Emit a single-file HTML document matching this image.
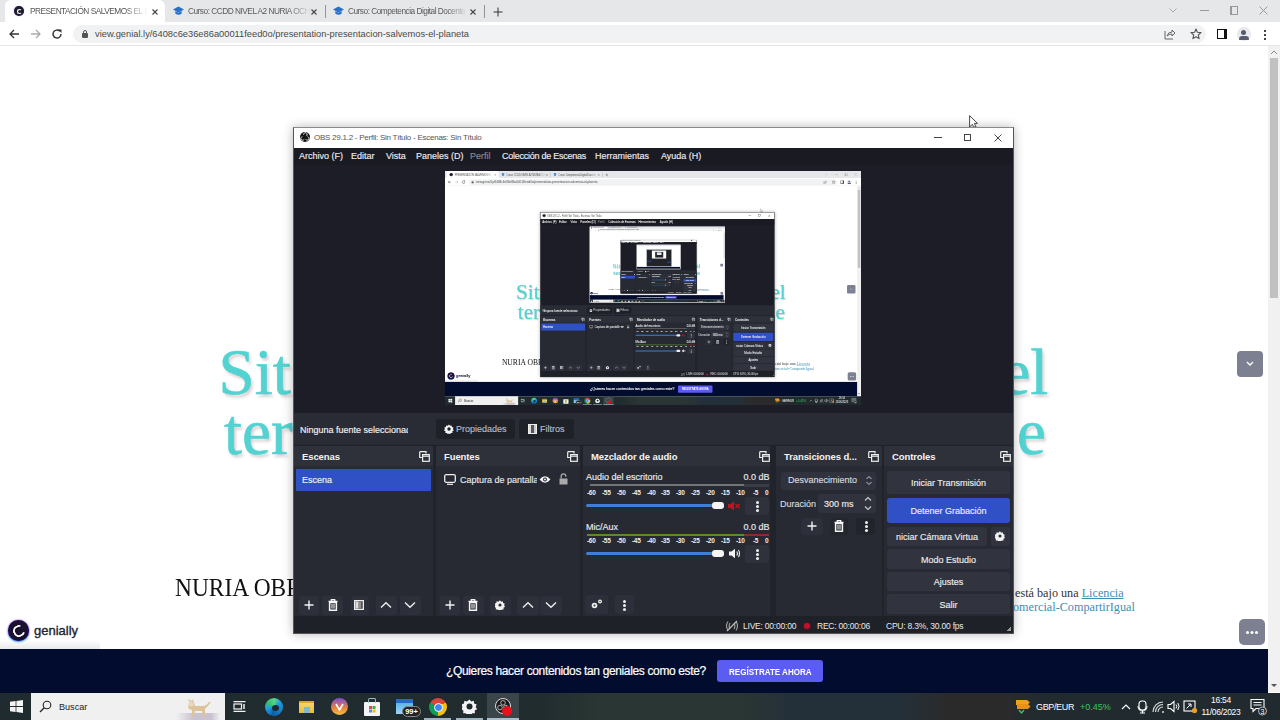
<!DOCTYPE html><html><head><meta charset="utf-8"><style>
*{margin:0;padding:0;box-sizing:border-box}
html,body{width:1280px;height:720px;overflow:hidden;background:#fff}
body{font-family:"Liberation Sans",sans-serif}
.d{position:absolute;left:0;top:0;width:1280px;height:720px;overflow:hidden;background:#fff}
.a{position:absolute;white-space:nowrap}
.tabs{position:absolute;left:0;top:0;width:1280px;height:22px;background:#e6e7e9}
.tab{position:absolute;top:1px;height:21px;font-size:8.3px;letter-spacing:-0.5px;color:#3c4043;line-height:21px;white-space:nowrap}
.tb{position:absolute;left:0;top:22px;width:1280px;height:24px;background:#fff;border-bottom:1px solid #e6e6e6}
.omni{position:absolute;left:73px;top:24.5px;width:1133px;height:18px;border-radius:9px;background:#f1f2f3}
.url{position:absolute;left:95px;top:29px;font-size:9.3px;color:#4a4a4a;line-height:10px}
.page{position:absolute;left:0;top:46px;width:1268px;height:603px;background:#fff;overflow:hidden}
.ttl{position:absolute;font-family:"Liberation Serif",serif;font-size:65px;color:#52d3d1;-webkit-text-stroke:0.6px #52d3d1;line-height:60px;text-shadow:2px 3px 3px rgba(150,120,130,.35)}
.band{position:absolute;left:0;top:649px;width:1268px;height:44px;background:#020c2e}
.task{position:absolute;left:0;top:693px;width:1280px;height:27px;background:linear-gradient(90deg,#202b2f 0,#212c2f 540px,#2a3633 600px,#2a3633 740px,#243039 790px,#243039 900px,#2b2a2a 950px,#2b2a2a 1000px,#212b2f 1040px,#212b2f 1280px)}
.obs{position:absolute;left:293px;top:127px;width:721px;height:507px;background:#1d1f27;border:1px solid #7a7a7a;border-top-color:#999;box-shadow:0 0 12px rgba(0,0,0,.25)}
.otitle{position:absolute;left:0;top:0;width:719px;height:21px;background:#fff}
.omenu{position:absolute;left:0;top:21px;width:719px;height:17px;background:#1a1a23;font-size:9px;color:#ececf0;line-height:17px;-webkit-text-stroke:0.15px currentColor}
.omenu span{position:absolute;top:0}
.dock{position:absolute;top:318px;height:171px;background:#272a33}
.dt{position:absolute;left:0;top:0;right:0;height:21px;background:#2e313b;font-size:10px;font-weight:bold;color:#f0f0f0;line-height:21px}
.btn{position:absolute;background:#2e313b;border-radius:2px}
.ct{position:absolute;left:3px;width:122px;background:#31343e;font-size:9px;color:#eee;text-align:center;border-radius:2px}
.ot{font-size:9px;color:#f2f2f2;line-height:12px;-webkit-text-stroke:0.15px currentColor}
.ost{top:620px;font-size:8.5px;letter-spacing:-0.22px;color:#e8e8e8;line-height:12px}
.dk{position:absolute;background:#272a33}
.dkt{position:absolute;height:20px;background:#2e313a;font-size:9.5px;letter-spacing:-0.1px;font-weight:bold;color:#f4f4f4;line-height:21px;padding-left:8px}
.fl{position:absolute;width:11px;height:11px}
.tbtn{position:absolute;background:#2d303a;border-radius:3px}
.cb{position:absolute;background:#31343e;border-radius:3px;padding-top:1px;font-size:9px;-webkit-text-stroke:0.15px currentColor;color:#ececec;text-align:center;line-height:20px}
.sc{position:absolute;font-size:6.5px;font-weight:bold;color:#eee;letter-spacing:-0.3px;line-height:7px}
</style></head><body><div class="d">
<!-- chrome tab strip -->
<div class="tabs">
 <div class="a" style="left:5px;top:0px;width:160px;height:22px;background:#fff;border-radius:6px 6px 0 0"></div>
 <div class="a" style="left:14px;top:6px;width:10px;height:10px;border-radius:50%;background:#1d1d2b;box-shadow:0 0 1px #a4f"></div>
 <div class="a" style="left:16.5px;top:8.5px;width:5px;height:5px;border-radius:50%;border:1.3px solid #fff;border-right-color:transparent"></div>
 <div class="tab" style="left:30px;width:118px;overflow:hidden;color:#555;-webkit-mask-image:linear-gradient(90deg,#000 80%,transparent)">PRESENTACIÓN SALVEMOS EL PLANETA</div>
 <svg class="a" style="left:152px;top:8.5px" width="6" height="6" viewBox="0 0 6 6"><path d="M0.5 0.5L5.5 5.5M5.5 0.5L0.5 5.5" stroke="#444" stroke-width="1.1"/></svg>
 <svg class="a" style="left:173px;top:6px" width="11" height="10" viewBox="0 0 11 10"><path d="M5.5 0.5L11 3.5L5.5 6.5L0 3.5Z" fill="#2a6fc9"/><path d="M2.3 5V7.6Q5.5 10 8.7 7.6V5L5.5 6.8Z" fill="#2a6fc9"/></svg>
 <div class="tab" style="left:188px;width:123px;overflow:hidden;color:#5a5a5a;-webkit-mask-image:linear-gradient(90deg,#000 82%,transparent)">Curso: CCDD NIVEL A2 NURIA OCHOA</div>
 <svg class="a" style="left:311px;top:8.5px" width="6" height="6" viewBox="0 0 6 6"><path d="M0.5 0.5L5.5 5.5M5.5 0.5L0.5 5.5" stroke="#444" stroke-width="1.1"/></svg>
 <div class="a" style="left:325px;top:5px;width:1px;height:13px;background:#8f959b"></div>
 <svg class="a" style="left:333px;top:6px" width="11" height="10" viewBox="0 0 11 10"><path d="M5.5 0.5L11 3.5L5.5 6.5L0 3.5Z" fill="#2a6fc9"/><path d="M2.3 5V7.6Q5.5 10 8.7 7.6V5L5.5 6.8Z" fill="#2a6fc9"/></svg>
 <div class="tab" style="left:348px;width:120px;overflow:hidden;color:#5a5a5a;-webkit-mask-image:linear-gradient(90deg,#000 82%,transparent)">Curso: Competencia Digital Docente</div>
 <svg class="a" style="left:470px;top:8.5px" width="6" height="6" viewBox="0 0 6 6"><path d="M0.5 0.5L5.5 5.5M5.5 0.5L0.5 5.5" stroke="#444" stroke-width="1.1"/></svg>
 <div class="a" style="left:484px;top:5px;width:1px;height:13px;background:#8f959b"></div>
 <svg class="a" style="left:493px;top:6.5px" width="10" height="10" viewBox="0 0 10 10"><path d="M5 0.5V9.5M0.5 5H9.5" stroke="#333" stroke-width="1"/></svg>
 <svg class="a" style="left:1169px;top:8px" width="8" height="5" viewBox="0 0 8 5"><path d="M0.5 0.5L4 4L7.5 0.5" stroke="#aaa" stroke-width="1" fill="none"/></svg>
 <div class="a" style="left:1200px;top:10px;width:9px;height:1px;background:#999"></div>
 <div class="a" style="left:1230px;top:6px;width:8px;height:9px;border:1px solid #999;border-left-width:2px"></div>
 <svg class="a" style="left:1259px;top:6px" width="9" height="9" viewBox="0 0 9 9"><path d="M0.5 0.5L8.5 8.5M8.5 0.5L0.5 8.5" stroke="#999" stroke-width="1"/></svg>
</div>
<div class="tb">
 <svg class="a" style="left:8px;top:6px" width="12" height="12" viewBox="0 0 12 12"><path d="M11 6H2M6 2L2 6L6 10" stroke="#333" stroke-width="1.3" fill="none"/></svg>
 <svg class="a" style="left:30px;top:6px" width="12" height="12" viewBox="0 0 12 12"><path d="M1 6H10M6 2L10 6L6 10" stroke="#aaa" stroke-width="1.3" fill="none"/></svg>
 <svg class="a" style="left:51px;top:6px" width="12" height="12" viewBox="0 0 12 12"><path d="M10 6A4 4 0 1 1 8.8 3.2" stroke="#333" stroke-width="1.4" fill="none"/><path d="M7 1.5H10.5V5Z" fill="#333"/></svg>
</div>
<div class="omni"></div>
<div class="a" style="left:82px;top:33px;width:6px;height:5px;background:#555;border-radius:1px"></div>
<div class="a" style="left:83px;top:30px;width:4px;height:5px;border:1.2px solid #555;border-radius:2px 2px 0 0"></div>
<div class="url a">view.genial.ly/6408c6e36e86a00011feed0o/presentation-presentacion-salvemos-el-planeta</div>
<svg class="a" style="left:1164px;top:28px" width="12" height="12" viewBox="0 0 12 12"><path d="M1 3V11H9" stroke="#666" stroke-width="1" fill="none"/><path d="M3 8Q4 4 8 4V2L11 5L8 8V6Q5 6 3 8Z" stroke="#666" stroke-width="1" fill="none"/></svg>
<svg class="a" style="left:1190px;top:28px" width="12" height="12" viewBox="0 0 12 12"><path d="M6 1L7.4 4.3L11 4.6L8.3 7L9.1 10.6L6 8.7L2.9 10.6L3.7 7L1 4.6L4.6 4.3Z" stroke="#555" stroke-width="1.1" fill="none" stroke-linejoin="round"/></svg>
<div class="a" style="left:1217px;top:29px;width:10px;height:10px;border:1.5px solid #111;border-right-width:3px"></div>
<div class="a" style="left:1237px;top:27px;width:14px;height:14px;border-radius:50%;background:#e8e8ef"></div>
<div class="a" style="left:1241px;top:30px;width:5px;height:5px;border-radius:50%;background:#555a6e"></div>
<div class="a" style="left:1239px;top:36px;width:10px;height:4px;border-radius:5px 5px 1px 1px;background:#555a6e"></div>
<div class="a" style="left:1264px;top:30px;width:2px;height:2px;background:#444;box-shadow:0 4px 0 #444,0 8px 0 #444"></div>

<!-- page -->
<div class="page">
 <div class="ttl a" style="left:218.5px;top:295.5px">Sit</div>
 <div class="ttl a" style="left:969px;top:295.5px">del</div>
 <div class="ttl a" style="left:224px;top:356px">ter</div>
 <div class="ttl a" style="left:1017px;top:356px">e</div>
 <div class="a" style="left:175px;top:527px;font-family:'Liberation Serif',serif;font-size:26px;line-height:30px;color:#111;transform:scaleX(0.9);transform-origin:0 0">NURIA OBRERO</div>
 <div class="a" style="left:1015px;top:540px;font-family:'Liberation Serif',serif;font-size:12.2px;line-height:14px;color:#333">está bajo una <span style="color:#3d8fb2;text-decoration:underline">Licencia</span></div>
 <div class="a" style="left:1013px;top:554px;font-family:'Liberation Serif',serif;font-size:12.2px;line-height:14px;color:#3d8fb2">omercial-CompartirIgual</div>
 <div class="a" style="left:1237px;top:305px;width:26px;height:26px;border-radius:4px;background:#7c8091"></div>
 <svg class="a" style="left:1245px;top:315px" width="10" height="6" viewBox="0 0 10 6"><path d="M2 1L5 4L8 1" stroke="#fff" stroke-width="1.4" fill="none"/></svg>
 <div class="a" style="left:1239px;top:573px;width:26px;height:26px;border-radius:5px;background:#7c8091"></div>
 <div class="a" style="left:1246px;top:585px;width:3px;height:3px;border-radius:50%;background:#fff;box-shadow:4.5px 0 0 #fff,9px 0 0 #fff"></div>
 <div class="a" style="left:0;top:594px;width:100px;height:9px;background:linear-gradient(#fff,#e9e9ea)"></div>
 <div class="a" style="left:8px;top:574px;width:21px;height:21px;border-radius:50%;background:#1a1030;box-shadow:0 0 2px #a0f,0 1px 2px #0cf"></div>
 <div class="a" style="left:12.5px;top:578.5px;width:12px;height:12px;border-radius:50%;border:2.5px solid #fff;border-right-color:transparent;transform:rotate(-30deg)"></div>
 <div class="a" style="left:34px;top:577.5px;font-size:13px;color:#22232f;line-height:14px;-webkit-text-stroke:0.35px #22232f">genially</div>
 <!-- scrollbar -->
</div>
<div class="a" style="left:1268px;top:46px;width:12px;height:646px;background:#f1f1f1"></div>
<div class="a" style="left:1270px;top:58px;width:8px;height:240px;background:#c1c1c1"></div>
<svg class="a" style="left:1270px;top:49px" width="8" height="6" viewBox="0 0 8 6"><path d="M1 5L4 2L7 5" stroke="#888" stroke-width="1" fill="none"/></svg>
<svg class="a" style="left:1270px;top:683px" width="8" height="6" viewBox="0 0 8 6"><path d="M1 1L4 4L7 1Z" fill="#555"/></svg>
<!-- band -->
<div class="band">
 <div class="a" style="left:446px;top:14px;font-size:12px;letter-spacing:-0.36px;-webkit-text-stroke:0.2px #fff;color:#fff;line-height:16px">¿Quieres hacer contenidos tan geniales como este?</div>
 <div class="a" style="left:717px;top:11px;width:106px;height:22px;border-radius:3px;background:#5b5cf2"></div>
 <div class="a" style="left:729px;top:17px;font-size:9.8px;font-weight:bold;color:#fff;line-height:12px;transform:scaleX(0.82);transform-origin:0 0">REGÍSTRATE AHORA</div>
</div>
<!-- taskbar -->
<div class="task">
 <svg class="a" style="left:10px;top:7px" width="13" height="13" viewBox="0 0 13 13"><path d="M0 1.8L5.6 1V6.1H0ZM6.4 0.9L13 0V6.1H6.4ZM0 6.9H5.6V12L0 11.2ZM6.4 6.9H13V13L6.4 12.1Z" fill="#f4f4f4"/></svg>
 <div class="a" style="left:31px;top:0;width:194px;height:27px;background:#f0f0f0"></div>
 <svg class="a" style="left:39px;top:7px" width="13" height="13" viewBox="0 0 13 13"><circle cx="8" cy="5" r="3.8" stroke="#222" stroke-width="1.1" fill="none"/><path d="M5.3 7.7L1 12" stroke="#222" stroke-width="1.3"/></svg>
 <div class="a" style="left:59px;top:8px;font-size:9.1px;color:#222;line-height:12px">Buscar</div>
 <div class="a" style="left:176px;top:20px;width:44px;height:7px;background:linear-gradient(90deg,#f0f0f0,#c9c2d0 40%,#c9c2d0 80%,#f0f0f0)"></div>
 <svg class="a" style="left:183px;top:3px" width="30" height="22" viewBox="0 0 30 22"><path d="M5 3L7 7Q4 10 6 13L9 14L9 21H11L12 15L19 15L20 21H22L22 13Q25 10 28 6L26 6Q23 10 20 10L12 10Q11 7 10 3L9 5Z" fill="#dcc39a"/><circle cx="8" cy="8" r="2.5" fill="#e9d8bb"/></svg>
 <svg class="a" style="left:233px;top:8px" width="13" height="11" viewBox="0 0 13 11"><path d="M0.5 0.7H12.5M0.5 10.3H12.5" stroke="#f2f2f2" stroke-width="1.2"/><rect x="1" y="3" width="7.5" height="5" stroke="#f2f2f2" stroke-width="1.2" fill="none"/><path d="M11 3V8" stroke="#f2f2f2" stroke-width="1.5"/></svg>
 <div class="a" style="left:265px;top:5px;width:18px;height:18px;border-radius:50%;background:conic-gradient(from 200deg,#0f6cbd,#1b9de2,#37c36b,#5fd38a,#1b9de2 60%,#0c5aa6)"></div>
 <div class="a" style="left:272px;top:12px;width:7px;height:6px;border-radius:50%;background:#1f292e"></div>
 <div class="a" style="left:299px;top:8px;width:15px;height:12px;background:linear-gradient(#f6d469,#e8bd3a);border-top:2px solid #d9a82a"></div>
 <div class="a" style="left:304px;top:14px;width:6px;height:6px;background:#7fb8d8"></div>
 <div class="a" style="left:331px;top:5px;width:17px;height:17px;border-radius:50%;background:linear-gradient(#7b4ad8,#e9863a 60%,#f0c24a)"></div>
 <svg class="a" style="left:335px;top:10px" width="9" height="8" viewBox="0 0 9 8"><path d="M1 1L4.5 7L8 1" stroke="#fff" stroke-width="1.6" fill="none"/></svg>
 <div class="a" style="left:364px;top:9px;width:16px;height:14px;background:#f4f4f4;border-radius:1px"></div>
 <div class="a" style="left:368px;top:5px;width:8px;height:5px;border:1.3px solid #9bbcc0;border-bottom:none;border-radius:2px 2px 0 0"></div>
 <div class="a" style="left:369px;top:13px;width:2.5px;height:2.5px;background:#e44;box-shadow:3.5px 0 0 #4a4,0 3.5px 0 #39f,3.5px 3.5px 0 #fb0"></div>
 <div class="a" style="left:396px;top:6px;width:17px;height:15px;background:linear-gradient(#1e6fc4 30%,#5fb6ea 30%,#9fd6f5)"></div>
 <div class="a" style="left:402px;top:13px;width:19px;height:11px;border-radius:6px;background:#222;border:1px solid #888;font-size:7.5px;color:#fff;line-height:9px;text-align:center;font-weight:bold">99+</div>
 <div class="a" style="left:429px;top:5px;width:18px;height:18px;border-radius:50%;background:conic-gradient(from -60deg,#db4437 0 120deg,#f4c20d 120deg 240deg,#0f9d58 240deg 360deg)"></div>
 <div class="a" style="left:433.5px;top:9.5px;width:9px;height:9px;border-radius:50%;background:#4285f4;border:1.6px solid #fff"></div>
 <svg class="a" style="left:462px;top:6px" width="15" height="15" viewBox="0 0 10 10"><path d="M5 0.3l1.1 1.4 1.7-.5.3 1.8 1.7.7-.7 1.6 1 1.5-1.6.9.1 1.8-1.8 0-.8 1.6-1.3-1.1-1.3 1.1-.8-1.6-1.8 0 .1-1.8-1.6-.9 1-1.5-.7-1.6 1.7-.7.3-1.8 1.7.5z" fill="#f4f4f4"/><circle cx="5" cy="5" r="2" fill="#1f292e"/></svg>
 <div class="a" style="left:487px;top:0;width:32px;height:27px;background:#3b4449"></div>
 <div class="a" style="left:495px;top:5px;width:16px;height:16px;border-radius:50%;background:#1a1a1a;border:1.2px solid #ddd"></div>
 <svg class="a" style="left:495px;top:5px" width="16" height="16" viewBox="0 0 16 16"><circle cx="8" cy="4.8" r="2.3" stroke="#bbb" stroke-width="0.9" fill="none"/><circle cx="5" cy="9.6" r="2.3" stroke="#bbb" stroke-width="0.9" fill="none"/><circle cx="10.8" cy="9.6" r="2.3" stroke="#bbb" stroke-width="0.9" fill="none"/></svg>
 <div class="a" style="left:502px;top:13px;width:10px;height:10px;border-radius:50%;background:#e8101c"></div>
 <div class="a" style="left:424px;top:25px;width:27px;height:2px;background:#9fb3c2"></div>
 <div class="a" style="left:456px;top:25px;width:27px;height:2px;background:#9fb3c2"></div>
 <div class="a" style="left:487px;top:25px;width:32px;height:2px;background:#a9bccb"></div>
 <svg class="a" style="left:1014px;top:5px" width="18" height="18" viewBox="0 0 18 18"><path d="M2 2H13L16 4.5L13 7H2Z" fill="#f0a020"/><path d="M3 6H14L16.5 8.5L14 11H3Z" fill="#e8901a"/><path d="M5 12L7.5 15L10 12" stroke="#3dc35a" stroke-width="1.4" fill="none"/></svg>
 <div class="a" style="left:1036px;top:8px;font-size:9px;letter-spacing:-0.35px;color:#fff;line-height:12px">GBP/EUR</div>
 <div class="a" style="left:1080px;top:8px;font-size:9px;color:#3dc35a;line-height:12px">+0.45%</div>
 <svg class="a" style="left:1121px;top:10px" width="10" height="7" viewBox="0 0 10 7"><path d="M1 6L5 2L9 6" stroke="#fff" stroke-width="1.1" fill="none"/></svg>
 <svg class="a" style="left:1137px;top:7px" width="11" height="14" viewBox="0 0 11 14"><rect x="2" y="1" width="7" height="9" rx="3" stroke="#fff" stroke-width="1.1" fill="none"/><path d="M5.5 10V13M3 13H8M1 6Q1 11 5.5 11Q10 11 10 6" stroke="#fff" stroke-width="1" fill="none"/></svg>
 <svg class="a" style="left:1152px;top:8px" width="14" height="12" viewBox="0 0 14 12"><path d="M1 11A10 10 0 0 1 11 1M3.5 11A7.5 7.5 0 0 1 11 3.5M6 11A5 5 0 0 1 11 6" stroke="#ddd" stroke-width="1.1" fill="none"/><circle cx="11" cy="11" r="1" fill="#ddd"/></svg>
 <svg class="a" style="left:1167px;top:7px" width="14" height="13" viewBox="0 0 14 13"><path d="M1 4.5H3.5L7 1.5V11.5L3.5 8.5H1Z" stroke="#fff" stroke-width="1.1" fill="none"/><path d="M9 4.5Q10.5 6.5 9 8.5M10.8 3Q13.3 6.5 10.8 10" stroke="#fff" stroke-width="1" fill="none"/></svg>
 <svg class="a" style="left:1183px;top:7px" width="15" height="14" viewBox="0 0 15 14"><rect x="1" y="1" width="11" height="10" stroke="#fff" stroke-width="1.1" fill="none"/><path d="M3.5 8.5L8 4M5 4H8V7" stroke="#fff" stroke-width="1" fill="none"/><circle cx="11.5" cy="10.5" r="2.6" fill="#f0a020"/></svg>
 <div class="a" style="left:1201px;top:1px;width:40px;font-size:8.5px;letter-spacing:-0.3px;color:#fff;text-align:center;line-height:12px">16:54<br>11/06/2023</div>
 <svg class="a" style="left:1250px;top:5px" width="18" height="18" viewBox="0 0 18 18"><path d="M1 1.5H14V10.5H6L3 13.5V10.5H1Z" stroke="#fff" stroke-width="1.1" fill="none"/><path d="M3.5 4.5H11.5M3.5 7H11.5" stroke="#fff" stroke-width="1"/><circle cx="12.5" cy="13" r="4" fill="#1f292e" stroke="#ccc" stroke-width="0.9"/><text x="12.5" y="15.8" font-size="7" fill="#fff" text-anchor="middle" font-family="Liberation Sans">3</text></svg>
</div>
<!-- OBS -->
<div class="a" style="left:293px;top:127px;width:721px;height:507px;background:#1c1d26;box-shadow:0 0 10px rgba(0,0,0,.28);border:1px solid #555;border-top-color:#8a8a8a"></div>
<div class="a otb" style="left:294px;top:128px;width:719px;height:20px;background:#fff"></div>
<div class="a" style="left:300px;top:132px;width:10px;height:10px;border-radius:50%;background:#121212"></div>
<svg class="a" style="left:300px;top:132px" width="10" height="10" viewBox="0 0 10 10"><path d="M3.6 2.8A1.8 1.8 0 1 1 6.2 4.1M4.2 7.4A1.8 1.8 0 1 1 2.4 4.6M7.6 4.6A1.8 1.8 0 1 1 5.6 7.3" stroke="#eee" stroke-width="0.9" fill="none"/></svg>
<div class="a" style="left:314px;top:132px;font-size:8px;letter-spacing:-0.25px;color:#555;line-height:11px">OBS 29.1.2 - Perfil: Sin Título - Escenas: Sin Título</div>
<div class="a" style="left:934px;top:137px;width:8px;height:1px;background:#444"></div>
<div class="a" style="left:964px;top:134px;width:7px;height:7px;border:1px solid #444"></div>
<svg class="a" style="left:994px;top:134px" width="8" height="8" viewBox="0 0 8 8"><path d="M0.5 0.5L7.5 7.5M7.5 0.5L0.5 7.5" stroke="#444" stroke-width="1"/></svg>
<div class="a omenu" style="left:294px;top:148px;width:719px;height:17px">
 <span style="left:5px">Archivo (F)</span><span style="left:57px">Editar</span><span style="left:92px">Vista</span><span style="left:122px">Paneles (D)</span><span style="left:176px;color:#8a8a93">Perfil</span><span style="left:208px;letter-spacing:-0.25px">Colección de Escenas</span><span style="left:301px">Herramientas</span><span style="left:367px">Ayuda (H)</span>
</div>
<div class="a" style="left:445px;top:171px;width:416px;height:234px;overflow:hidden;background:#fff"><div class="a lv" style="left:0;top:0;width:1280px;height:720px;transform:scale(0.325);transform-origin:0 0"><div class="d">
<!-- chrome tab strip -->
<div class="tabs">
 <div class="a" style="left:5px;top:0px;width:160px;height:22px;background:#fff;border-radius:6px 6px 0 0"></div>
 <div class="a" style="left:14px;top:6px;width:10px;height:10px;border-radius:50%;background:#1d1d2b;box-shadow:0 0 1px #a4f"></div>
 <div class="a" style="left:16.5px;top:8.5px;width:5px;height:5px;border-radius:50%;border:1.3px solid #fff;border-right-color:transparent"></div>
 <div class="tab" style="left:30px;width:118px;overflow:hidden;color:#555;-webkit-mask-image:linear-gradient(90deg,#000 80%,transparent)">PRESENTACIÓN SALVEMOS EL PLANETA</div>
 <svg class="a" style="left:152px;top:8.5px" width="6" height="6" viewBox="0 0 6 6"><path d="M0.5 0.5L5.5 5.5M5.5 0.5L0.5 5.5" stroke="#444" stroke-width="1.1"/></svg>
 <svg class="a" style="left:173px;top:6px" width="11" height="10" viewBox="0 0 11 10"><path d="M5.5 0.5L11 3.5L5.5 6.5L0 3.5Z" fill="#2a6fc9"/><path d="M2.3 5V7.6Q5.5 10 8.7 7.6V5L5.5 6.8Z" fill="#2a6fc9"/></svg>
 <div class="tab" style="left:188px;width:123px;overflow:hidden;color:#5a5a5a;-webkit-mask-image:linear-gradient(90deg,#000 82%,transparent)">Curso: CCDD NIVEL A2 NURIA OCHOA</div>
 <svg class="a" style="left:311px;top:8.5px" width="6" height="6" viewBox="0 0 6 6"><path d="M0.5 0.5L5.5 5.5M5.5 0.5L0.5 5.5" stroke="#444" stroke-width="1.1"/></svg>
 <div class="a" style="left:325px;top:5px;width:1px;height:13px;background:#8f959b"></div>
 <svg class="a" style="left:333px;top:6px" width="11" height="10" viewBox="0 0 11 10"><path d="M5.5 0.5L11 3.5L5.5 6.5L0 3.5Z" fill="#2a6fc9"/><path d="M2.3 5V7.6Q5.5 10 8.7 7.6V5L5.5 6.8Z" fill="#2a6fc9"/></svg>
 <div class="tab" style="left:348px;width:120px;overflow:hidden;color:#5a5a5a;-webkit-mask-image:linear-gradient(90deg,#000 82%,transparent)">Curso: Competencia Digital Docente</div>
 <svg class="a" style="left:470px;top:8.5px" width="6" height="6" viewBox="0 0 6 6"><path d="M0.5 0.5L5.5 5.5M5.5 0.5L0.5 5.5" stroke="#444" stroke-width="1.1"/></svg>
 <div class="a" style="left:484px;top:5px;width:1px;height:13px;background:#8f959b"></div>
 <svg class="a" style="left:493px;top:6.5px" width="10" height="10" viewBox="0 0 10 10"><path d="M5 0.5V9.5M0.5 5H9.5" stroke="#333" stroke-width="1"/></svg>
 <svg class="a" style="left:1169px;top:8px" width="8" height="5" viewBox="0 0 8 5"><path d="M0.5 0.5L4 4L7.5 0.5" stroke="#aaa" stroke-width="1" fill="none"/></svg>
 <div class="a" style="left:1200px;top:10px;width:9px;height:1px;background:#999"></div>
 <div class="a" style="left:1230px;top:6px;width:8px;height:9px;border:1px solid #999;border-left-width:2px"></div>
 <svg class="a" style="left:1259px;top:6px" width="9" height="9" viewBox="0 0 9 9"><path d="M0.5 0.5L8.5 8.5M8.5 0.5L0.5 8.5" stroke="#999" stroke-width="1"/></svg>
</div>
<div class="tb">
 <svg class="a" style="left:8px;top:6px" width="12" height="12" viewBox="0 0 12 12"><path d="M11 6H2M6 2L2 6L6 10" stroke="#333" stroke-width="1.3" fill="none"/></svg>
 <svg class="a" style="left:30px;top:6px" width="12" height="12" viewBox="0 0 12 12"><path d="M1 6H10M6 2L10 6L6 10" stroke="#aaa" stroke-width="1.3" fill="none"/></svg>
 <svg class="a" style="left:51px;top:6px" width="12" height="12" viewBox="0 0 12 12"><path d="M10 6A4 4 0 1 1 8.8 3.2" stroke="#333" stroke-width="1.4" fill="none"/><path d="M7 1.5H10.5V5Z" fill="#333"/></svg>
</div>
<div class="omni"></div>
<div class="a" style="left:82px;top:33px;width:6px;height:5px;background:#555;border-radius:1px"></div>
<div class="a" style="left:83px;top:30px;width:4px;height:5px;border:1.2px solid #555;border-radius:2px 2px 0 0"></div>
<div class="url a">view.genial.ly/6408c6e36e86a00011feed0o/presentation-presentacion-salvemos-el-planeta</div>
<svg class="a" style="left:1164px;top:28px" width="12" height="12" viewBox="0 0 12 12"><path d="M1 3V11H9" stroke="#666" stroke-width="1" fill="none"/><path d="M3 8Q4 4 8 4V2L11 5L8 8V6Q5 6 3 8Z" stroke="#666" stroke-width="1" fill="none"/></svg>
<svg class="a" style="left:1190px;top:28px" width="12" height="12" viewBox="0 0 12 12"><path d="M6 1L7.4 4.3L11 4.6L8.3 7L9.1 10.6L6 8.7L2.9 10.6L3.7 7L1 4.6L4.6 4.3Z" stroke="#555" stroke-width="1.1" fill="none" stroke-linejoin="round"/></svg>
<div class="a" style="left:1217px;top:29px;width:10px;height:10px;border:1.5px solid #111;border-right-width:3px"></div>
<div class="a" style="left:1237px;top:27px;width:14px;height:14px;border-radius:50%;background:#e8e8ef"></div>
<div class="a" style="left:1241px;top:30px;width:5px;height:5px;border-radius:50%;background:#555a6e"></div>
<div class="a" style="left:1239px;top:36px;width:10px;height:4px;border-radius:5px 5px 1px 1px;background:#555a6e"></div>
<div class="a" style="left:1264px;top:30px;width:2px;height:2px;background:#444;box-shadow:0 4px 0 #444,0 8px 0 #444"></div>

<!-- page -->
<div class="page">
 <div class="ttl a" style="left:218.5px;top:295.5px">Sit</div>
 <div class="ttl a" style="left:969px;top:295.5px">del</div>
 <div class="ttl a" style="left:224px;top:356px">ter</div>
 <div class="ttl a" style="left:1017px;top:356px">e</div>
 <div class="a" style="left:175px;top:527px;font-family:'Liberation Serif',serif;font-size:26px;line-height:30px;color:#111;transform:scaleX(0.9);transform-origin:0 0">NURIA OBRERO</div>
 <div class="a" style="left:1015px;top:540px;font-family:'Liberation Serif',serif;font-size:12.2px;line-height:14px;color:#333">está bajo una <span style="color:#3d8fb2;text-decoration:underline">Licencia</span></div>
 <div class="a" style="left:1013px;top:554px;font-family:'Liberation Serif',serif;font-size:12.2px;line-height:14px;color:#3d8fb2">omercial-CompartirIgual</div>
 <div class="a" style="left:1237px;top:305px;width:26px;height:26px;border-radius:4px;background:#7c8091"></div>
 <svg class="a" style="left:1245px;top:315px" width="10" height="6" viewBox="0 0 10 6"><path d="M2 1L5 4L8 1" stroke="#fff" stroke-width="1.4" fill="none"/></svg>
 <div class="a" style="left:1239px;top:573px;width:26px;height:26px;border-radius:5px;background:#7c8091"></div>
 <div class="a" style="left:1246px;top:585px;width:3px;height:3px;border-radius:50%;background:#fff;box-shadow:4.5px 0 0 #fff,9px 0 0 #fff"></div>
 <div class="a" style="left:0;top:594px;width:100px;height:9px;background:linear-gradient(#fff,#e9e9ea)"></div>
 <div class="a" style="left:8px;top:574px;width:21px;height:21px;border-radius:50%;background:#1a1030;box-shadow:0 0 2px #a0f,0 1px 2px #0cf"></div>
 <div class="a" style="left:12.5px;top:578.5px;width:12px;height:12px;border-radius:50%;border:2.5px solid #fff;border-right-color:transparent;transform:rotate(-30deg)"></div>
 <div class="a" style="left:34px;top:577.5px;font-size:13px;color:#22232f;line-height:14px;-webkit-text-stroke:0.35px #22232f">genially</div>
 <!-- scrollbar -->
</div>
<div class="a" style="left:1268px;top:46px;width:12px;height:646px;background:#f1f1f1"></div>
<div class="a" style="left:1270px;top:58px;width:8px;height:240px;background:#c1c1c1"></div>
<svg class="a" style="left:1270px;top:49px" width="8" height="6" viewBox="0 0 8 6"><path d="M1 5L4 2L7 5" stroke="#888" stroke-width="1" fill="none"/></svg>
<svg class="a" style="left:1270px;top:683px" width="8" height="6" viewBox="0 0 8 6"><path d="M1 1L4 4L7 1Z" fill="#555"/></svg>
<!-- band -->
<div class="band">
 <div class="a" style="left:446px;top:14px;font-size:12px;letter-spacing:-0.36px;-webkit-text-stroke:0.2px #fff;color:#fff;line-height:16px">¿Quieres hacer contenidos tan geniales como este?</div>
 <div class="a" style="left:717px;top:11px;width:106px;height:22px;border-radius:3px;background:#5b5cf2"></div>
 <div class="a" style="left:729px;top:17px;font-size:9.8px;font-weight:bold;color:#fff;line-height:12px;transform:scaleX(0.82);transform-origin:0 0">REGÍSTRATE AHORA</div>
</div>
<!-- taskbar -->
<div class="task">
 <svg class="a" style="left:10px;top:7px" width="13" height="13" viewBox="0 0 13 13"><path d="M0 1.8L5.6 1V6.1H0ZM6.4 0.9L13 0V6.1H6.4ZM0 6.9H5.6V12L0 11.2ZM6.4 6.9H13V13L6.4 12.1Z" fill="#f4f4f4"/></svg>
 <div class="a" style="left:31px;top:0;width:194px;height:27px;background:#f0f0f0"></div>
 <svg class="a" style="left:39px;top:7px" width="13" height="13" viewBox="0 0 13 13"><circle cx="8" cy="5" r="3.8" stroke="#222" stroke-width="1.1" fill="none"/><path d="M5.3 7.7L1 12" stroke="#222" stroke-width="1.3"/></svg>
 <div class="a" style="left:59px;top:8px;font-size:9.1px;color:#222;line-height:12px">Buscar</div>
 <div class="a" style="left:176px;top:20px;width:44px;height:7px;background:linear-gradient(90deg,#f0f0f0,#c9c2d0 40%,#c9c2d0 80%,#f0f0f0)"></div>
 <svg class="a" style="left:183px;top:3px" width="30" height="22" viewBox="0 0 30 22"><path d="M5 3L7 7Q4 10 6 13L9 14L9 21H11L12 15L19 15L20 21H22L22 13Q25 10 28 6L26 6Q23 10 20 10L12 10Q11 7 10 3L9 5Z" fill="#dcc39a"/><circle cx="8" cy="8" r="2.5" fill="#e9d8bb"/></svg>
 <svg class="a" style="left:233px;top:8px" width="13" height="11" viewBox="0 0 13 11"><path d="M0.5 0.7H12.5M0.5 10.3H12.5" stroke="#f2f2f2" stroke-width="1.2"/><rect x="1" y="3" width="7.5" height="5" stroke="#f2f2f2" stroke-width="1.2" fill="none"/><path d="M11 3V8" stroke="#f2f2f2" stroke-width="1.5"/></svg>
 <div class="a" style="left:265px;top:5px;width:18px;height:18px;border-radius:50%;background:conic-gradient(from 200deg,#0f6cbd,#1b9de2,#37c36b,#5fd38a,#1b9de2 60%,#0c5aa6)"></div>
 <div class="a" style="left:272px;top:12px;width:7px;height:6px;border-radius:50%;background:#1f292e"></div>
 <div class="a" style="left:299px;top:8px;width:15px;height:12px;background:linear-gradient(#f6d469,#e8bd3a);border-top:2px solid #d9a82a"></div>
 <div class="a" style="left:304px;top:14px;width:6px;height:6px;background:#7fb8d8"></div>
 <div class="a" style="left:331px;top:5px;width:17px;height:17px;border-radius:50%;background:linear-gradient(#7b4ad8,#e9863a 60%,#f0c24a)"></div>
 <svg class="a" style="left:335px;top:10px" width="9" height="8" viewBox="0 0 9 8"><path d="M1 1L4.5 7L8 1" stroke="#fff" stroke-width="1.6" fill="none"/></svg>
 <div class="a" style="left:364px;top:9px;width:16px;height:14px;background:#f4f4f4;border-radius:1px"></div>
 <div class="a" style="left:368px;top:5px;width:8px;height:5px;border:1.3px solid #9bbcc0;border-bottom:none;border-radius:2px 2px 0 0"></div>
 <div class="a" style="left:369px;top:13px;width:2.5px;height:2.5px;background:#e44;box-shadow:3.5px 0 0 #4a4,0 3.5px 0 #39f,3.5px 3.5px 0 #fb0"></div>
 <div class="a" style="left:396px;top:6px;width:17px;height:15px;background:linear-gradient(#1e6fc4 30%,#5fb6ea 30%,#9fd6f5)"></div>
 <div class="a" style="left:402px;top:13px;width:19px;height:11px;border-radius:6px;background:#222;border:1px solid #888;font-size:7.5px;color:#fff;line-height:9px;text-align:center;font-weight:bold">99+</div>
 <div class="a" style="left:429px;top:5px;width:18px;height:18px;border-radius:50%;background:conic-gradient(from -60deg,#db4437 0 120deg,#f4c20d 120deg 240deg,#0f9d58 240deg 360deg)"></div>
 <div class="a" style="left:433.5px;top:9.5px;width:9px;height:9px;border-radius:50%;background:#4285f4;border:1.6px solid #fff"></div>
 <svg class="a" style="left:462px;top:6px" width="15" height="15" viewBox="0 0 10 10"><path d="M5 0.3l1.1 1.4 1.7-.5.3 1.8 1.7.7-.7 1.6 1 1.5-1.6.9.1 1.8-1.8 0-.8 1.6-1.3-1.1-1.3 1.1-.8-1.6-1.8 0 .1-1.8-1.6-.9 1-1.5-.7-1.6 1.7-.7.3-1.8 1.7.5z" fill="#f4f4f4"/><circle cx="5" cy="5" r="2" fill="#1f292e"/></svg>
 <div class="a" style="left:487px;top:0;width:32px;height:27px;background:#3b4449"></div>
 <div class="a" style="left:495px;top:5px;width:16px;height:16px;border-radius:50%;background:#1a1a1a;border:1.2px solid #ddd"></div>
 <svg class="a" style="left:495px;top:5px" width="16" height="16" viewBox="0 0 16 16"><circle cx="8" cy="4.8" r="2.3" stroke="#bbb" stroke-width="0.9" fill="none"/><circle cx="5" cy="9.6" r="2.3" stroke="#bbb" stroke-width="0.9" fill="none"/><circle cx="10.8" cy="9.6" r="2.3" stroke="#bbb" stroke-width="0.9" fill="none"/></svg>
 <div class="a" style="left:502px;top:13px;width:10px;height:10px;border-radius:50%;background:#e8101c"></div>
 <div class="a" style="left:424px;top:25px;width:27px;height:2px;background:#9fb3c2"></div>
 <div class="a" style="left:456px;top:25px;width:27px;height:2px;background:#9fb3c2"></div>
 <div class="a" style="left:487px;top:25px;width:32px;height:2px;background:#a9bccb"></div>
 <svg class="a" style="left:1014px;top:5px" width="18" height="18" viewBox="0 0 18 18"><path d="M2 2H13L16 4.5L13 7H2Z" fill="#f0a020"/><path d="M3 6H14L16.5 8.5L14 11H3Z" fill="#e8901a"/><path d="M5 12L7.5 15L10 12" stroke="#3dc35a" stroke-width="1.4" fill="none"/></svg>
 <div class="a" style="left:1036px;top:8px;font-size:9px;letter-spacing:-0.35px;color:#fff;line-height:12px">GBP/EUR</div>
 <div class="a" style="left:1080px;top:8px;font-size:9px;color:#3dc35a;line-height:12px">+0.45%</div>
 <svg class="a" style="left:1121px;top:10px" width="10" height="7" viewBox="0 0 10 7"><path d="M1 6L5 2L9 6" stroke="#fff" stroke-width="1.1" fill="none"/></svg>
 <svg class="a" style="left:1137px;top:7px" width="11" height="14" viewBox="0 0 11 14"><rect x="2" y="1" width="7" height="9" rx="3" stroke="#fff" stroke-width="1.1" fill="none"/><path d="M5.5 10V13M3 13H8M1 6Q1 11 5.5 11Q10 11 10 6" stroke="#fff" stroke-width="1" fill="none"/></svg>
 <svg class="a" style="left:1152px;top:8px" width="14" height="12" viewBox="0 0 14 12"><path d="M1 11A10 10 0 0 1 11 1M3.5 11A7.5 7.5 0 0 1 11 3.5M6 11A5 5 0 0 1 11 6" stroke="#ddd" stroke-width="1.1" fill="none"/><circle cx="11" cy="11" r="1" fill="#ddd"/></svg>
 <svg class="a" style="left:1167px;top:7px" width="14" height="13" viewBox="0 0 14 13"><path d="M1 4.5H3.5L7 1.5V11.5L3.5 8.5H1Z" stroke="#fff" stroke-width="1.1" fill="none"/><path d="M9 4.5Q10.5 6.5 9 8.5M10.8 3Q13.3 6.5 10.8 10" stroke="#fff" stroke-width="1" fill="none"/></svg>
 <svg class="a" style="left:1183px;top:7px" width="15" height="14" viewBox="0 0 15 14"><rect x="1" y="1" width="11" height="10" stroke="#fff" stroke-width="1.1" fill="none"/><path d="M3.5 8.5L8 4M5 4H8V7" stroke="#fff" stroke-width="1" fill="none"/><circle cx="11.5" cy="10.5" r="2.6" fill="#f0a020"/></svg>
 <div class="a" style="left:1201px;top:1px;width:40px;font-size:8.5px;letter-spacing:-0.3px;color:#fff;text-align:center;line-height:12px">16:54<br>11/06/2023</div>
 <svg class="a" style="left:1250px;top:5px" width="18" height="18" viewBox="0 0 18 18"><path d="M1 1.5H14V10.5H6L3 13.5V10.5H1Z" stroke="#fff" stroke-width="1.1" fill="none"/><path d="M3.5 4.5H11.5M3.5 7H11.5" stroke="#fff" stroke-width="1"/><circle cx="12.5" cy="13" r="4" fill="#1f292e" stroke="#ccc" stroke-width="0.9"/><text x="12.5" y="15.8" font-size="7" fill="#fff" text-anchor="middle" font-family="Liberation Sans">3</text></svg>
</div>
<!-- OBS -->
<div class="a" style="left:293px;top:127px;width:721px;height:507px;background:#1c1d26;box-shadow:0 0 10px rgba(0,0,0,.28);border:1px solid #555;border-top-color:#8a8a8a"></div>
<div class="a otb" style="left:294px;top:128px;width:719px;height:20px;background:#fff"></div>
<div class="a" style="left:300px;top:132px;width:10px;height:10px;border-radius:50%;background:#121212"></div>
<svg class="a" style="left:300px;top:132px" width="10" height="10" viewBox="0 0 10 10"><path d="M3.6 2.8A1.8 1.8 0 1 1 6.2 4.1M4.2 7.4A1.8 1.8 0 1 1 2.4 4.6M7.6 4.6A1.8 1.8 0 1 1 5.6 7.3" stroke="#eee" stroke-width="0.9" fill="none"/></svg>
<div class="a" style="left:314px;top:132px;font-size:8px;letter-spacing:-0.25px;color:#555;line-height:11px">OBS 29.1.2 - Perfil: Sin Título - Escenas: Sin Título</div>
<div class="a" style="left:934px;top:137px;width:8px;height:1px;background:#444"></div>
<div class="a" style="left:964px;top:134px;width:7px;height:7px;border:1px solid #444"></div>
<svg class="a" style="left:994px;top:134px" width="8" height="8" viewBox="0 0 8 8"><path d="M0.5 0.5L7.5 7.5M7.5 0.5L0.5 7.5" stroke="#444" stroke-width="1"/></svg>
<div class="a omenu" style="left:294px;top:148px;width:719px;height:17px">
 <span style="left:5px">Archivo (F)</span><span style="left:57px">Editar</span><span style="left:92px">Vista</span><span style="left:122px">Paneles (D)</span><span style="left:176px;color:#8a8a93">Perfil</span><span style="left:208px;letter-spacing:-0.25px">Colección de Escenas</span><span style="left:301px">Herramientas</span><span style="left:367px">Ayuda (H)</span>
</div>
<div class="a" style="left:445px;top:171px;width:416px;height:234px;overflow:hidden;background:#fff"><div class="a lv" style="left:0;top:0;width:1280px;height:720px;transform:scale(0.325);transform-origin:0 0"><div class="d">
<!-- chrome tab strip -->
<div class="tabs">
 <div class="a" style="left:5px;top:0px;width:160px;height:22px;background:#fff;border-radius:6px 6px 0 0"></div>
 <div class="a" style="left:14px;top:6px;width:10px;height:10px;border-radius:50%;background:#1d1d2b;box-shadow:0 0 1px #a4f"></div>
 <div class="a" style="left:16.5px;top:8.5px;width:5px;height:5px;border-radius:50%;border:1.3px solid #fff;border-right-color:transparent"></div>
 <div class="tab" style="left:30px;width:118px;overflow:hidden;color:#555;-webkit-mask-image:linear-gradient(90deg,#000 80%,transparent)">PRESENTACIÓN SALVEMOS EL PLANETA</div>
 <svg class="a" style="left:152px;top:8.5px" width="6" height="6" viewBox="0 0 6 6"><path d="M0.5 0.5L5.5 5.5M5.5 0.5L0.5 5.5" stroke="#444" stroke-width="1.1"/></svg>
 <svg class="a" style="left:173px;top:6px" width="11" height="10" viewBox="0 0 11 10"><path d="M5.5 0.5L11 3.5L5.5 6.5L0 3.5Z" fill="#2a6fc9"/><path d="M2.3 5V7.6Q5.5 10 8.7 7.6V5L5.5 6.8Z" fill="#2a6fc9"/></svg>
 <div class="tab" style="left:188px;width:123px;overflow:hidden;color:#5a5a5a;-webkit-mask-image:linear-gradient(90deg,#000 82%,transparent)">Curso: CCDD NIVEL A2 NURIA OCHOA</div>
 <svg class="a" style="left:311px;top:8.5px" width="6" height="6" viewBox="0 0 6 6"><path d="M0.5 0.5L5.5 5.5M5.5 0.5L0.5 5.5" stroke="#444" stroke-width="1.1"/></svg>
 <div class="a" style="left:325px;top:5px;width:1px;height:13px;background:#8f959b"></div>
 <svg class="a" style="left:333px;top:6px" width="11" height="10" viewBox="0 0 11 10"><path d="M5.5 0.5L11 3.5L5.5 6.5L0 3.5Z" fill="#2a6fc9"/><path d="M2.3 5V7.6Q5.5 10 8.7 7.6V5L5.5 6.8Z" fill="#2a6fc9"/></svg>
 <div class="tab" style="left:348px;width:120px;overflow:hidden;color:#5a5a5a;-webkit-mask-image:linear-gradient(90deg,#000 82%,transparent)">Curso: Competencia Digital Docente</div>
 <svg class="a" style="left:470px;top:8.5px" width="6" height="6" viewBox="0 0 6 6"><path d="M0.5 0.5L5.5 5.5M5.5 0.5L0.5 5.5" stroke="#444" stroke-width="1.1"/></svg>
 <div class="a" style="left:484px;top:5px;width:1px;height:13px;background:#8f959b"></div>
 <svg class="a" style="left:493px;top:6.5px" width="10" height="10" viewBox="0 0 10 10"><path d="M5 0.5V9.5M0.5 5H9.5" stroke="#333" stroke-width="1"/></svg>
 <svg class="a" style="left:1169px;top:8px" width="8" height="5" viewBox="0 0 8 5"><path d="M0.5 0.5L4 4L7.5 0.5" stroke="#aaa" stroke-width="1" fill="none"/></svg>
 <div class="a" style="left:1200px;top:10px;width:9px;height:1px;background:#999"></div>
 <div class="a" style="left:1230px;top:6px;width:8px;height:9px;border:1px solid #999;border-left-width:2px"></div>
 <svg class="a" style="left:1259px;top:6px" width="9" height="9" viewBox="0 0 9 9"><path d="M0.5 0.5L8.5 8.5M8.5 0.5L0.5 8.5" stroke="#999" stroke-width="1"/></svg>
</div>
<div class="tb">
 <svg class="a" style="left:8px;top:6px" width="12" height="12" viewBox="0 0 12 12"><path d="M11 6H2M6 2L2 6L6 10" stroke="#333" stroke-width="1.3" fill="none"/></svg>
 <svg class="a" style="left:30px;top:6px" width="12" height="12" viewBox="0 0 12 12"><path d="M1 6H10M6 2L10 6L6 10" stroke="#aaa" stroke-width="1.3" fill="none"/></svg>
 <svg class="a" style="left:51px;top:6px" width="12" height="12" viewBox="0 0 12 12"><path d="M10 6A4 4 0 1 1 8.8 3.2" stroke="#333" stroke-width="1.4" fill="none"/><path d="M7 1.5H10.5V5Z" fill="#333"/></svg>
</div>
<div class="omni"></div>
<div class="a" style="left:82px;top:33px;width:6px;height:5px;background:#555;border-radius:1px"></div>
<div class="a" style="left:83px;top:30px;width:4px;height:5px;border:1.2px solid #555;border-radius:2px 2px 0 0"></div>
<div class="url a">view.genial.ly/6408c6e36e86a00011feed0o/presentation-presentacion-salvemos-el-planeta</div>
<svg class="a" style="left:1164px;top:28px" width="12" height="12" viewBox="0 0 12 12"><path d="M1 3V11H9" stroke="#666" stroke-width="1" fill="none"/><path d="M3 8Q4 4 8 4V2L11 5L8 8V6Q5 6 3 8Z" stroke="#666" stroke-width="1" fill="none"/></svg>
<svg class="a" style="left:1190px;top:28px" width="12" height="12" viewBox="0 0 12 12"><path d="M6 1L7.4 4.3L11 4.6L8.3 7L9.1 10.6L6 8.7L2.9 10.6L3.7 7L1 4.6L4.6 4.3Z" stroke="#555" stroke-width="1.1" fill="none" stroke-linejoin="round"/></svg>
<div class="a" style="left:1217px;top:29px;width:10px;height:10px;border:1.5px solid #111;border-right-width:3px"></div>
<div class="a" style="left:1237px;top:27px;width:14px;height:14px;border-radius:50%;background:#e8e8ef"></div>
<div class="a" style="left:1241px;top:30px;width:5px;height:5px;border-radius:50%;background:#555a6e"></div>
<div class="a" style="left:1239px;top:36px;width:10px;height:4px;border-radius:5px 5px 1px 1px;background:#555a6e"></div>
<div class="a" style="left:1264px;top:30px;width:2px;height:2px;background:#444;box-shadow:0 4px 0 #444,0 8px 0 #444"></div>

<!-- page -->
<div class="page">
 <div class="ttl a" style="left:218.5px;top:295.5px">Sit</div>
 <div class="ttl a" style="left:969px;top:295.5px">del</div>
 <div class="ttl a" style="left:224px;top:356px">ter</div>
 <div class="ttl a" style="left:1017px;top:356px">e</div>
 <div class="a" style="left:175px;top:527px;font-family:'Liberation Serif',serif;font-size:26px;line-height:30px;color:#111;transform:scaleX(0.9);transform-origin:0 0">NURIA OBRERO</div>
 <div class="a" style="left:1015px;top:540px;font-family:'Liberation Serif',serif;font-size:12.2px;line-height:14px;color:#333">está bajo una <span style="color:#3d8fb2;text-decoration:underline">Licencia</span></div>
 <div class="a" style="left:1013px;top:554px;font-family:'Liberation Serif',serif;font-size:12.2px;line-height:14px;color:#3d8fb2">omercial-CompartirIgual</div>
 <div class="a" style="left:1237px;top:305px;width:26px;height:26px;border-radius:4px;background:#7c8091"></div>
 <svg class="a" style="left:1245px;top:315px" width="10" height="6" viewBox="0 0 10 6"><path d="M2 1L5 4L8 1" stroke="#fff" stroke-width="1.4" fill="none"/></svg>
 <div class="a" style="left:1239px;top:573px;width:26px;height:26px;border-radius:5px;background:#7c8091"></div>
 <div class="a" style="left:1246px;top:585px;width:3px;height:3px;border-radius:50%;background:#fff;box-shadow:4.5px 0 0 #fff,9px 0 0 #fff"></div>
 <div class="a" style="left:0;top:594px;width:100px;height:9px;background:linear-gradient(#fff,#e9e9ea)"></div>
 <div class="a" style="left:8px;top:574px;width:21px;height:21px;border-radius:50%;background:#1a1030;box-shadow:0 0 2px #a0f,0 1px 2px #0cf"></div>
 <div class="a" style="left:12.5px;top:578.5px;width:12px;height:12px;border-radius:50%;border:2.5px solid #fff;border-right-color:transparent;transform:rotate(-30deg)"></div>
 <div class="a" style="left:34px;top:577.5px;font-size:13px;color:#22232f;line-height:14px;-webkit-text-stroke:0.35px #22232f">genially</div>
 <!-- scrollbar -->
</div>
<div class="a" style="left:1268px;top:46px;width:12px;height:646px;background:#f1f1f1"></div>
<div class="a" style="left:1270px;top:58px;width:8px;height:240px;background:#c1c1c1"></div>
<svg class="a" style="left:1270px;top:49px" width="8" height="6" viewBox="0 0 8 6"><path d="M1 5L4 2L7 5" stroke="#888" stroke-width="1" fill="none"/></svg>
<svg class="a" style="left:1270px;top:683px" width="8" height="6" viewBox="0 0 8 6"><path d="M1 1L4 4L7 1Z" fill="#555"/></svg>
<!-- band -->
<div class="band">
 <div class="a" style="left:446px;top:14px;font-size:12px;letter-spacing:-0.36px;-webkit-text-stroke:0.2px #fff;color:#fff;line-height:16px">¿Quieres hacer contenidos tan geniales como este?</div>
 <div class="a" style="left:717px;top:11px;width:106px;height:22px;border-radius:3px;background:#5b5cf2"></div>
 <div class="a" style="left:729px;top:17px;font-size:9.8px;font-weight:bold;color:#fff;line-height:12px;transform:scaleX(0.82);transform-origin:0 0">REGÍSTRATE AHORA</div>
</div>
<!-- taskbar -->
<div class="task">
 <svg class="a" style="left:10px;top:7px" width="13" height="13" viewBox="0 0 13 13"><path d="M0 1.8L5.6 1V6.1H0ZM6.4 0.9L13 0V6.1H6.4ZM0 6.9H5.6V12L0 11.2ZM6.4 6.9H13V13L6.4 12.1Z" fill="#f4f4f4"/></svg>
 <div class="a" style="left:31px;top:0;width:194px;height:27px;background:#f0f0f0"></div>
 <svg class="a" style="left:39px;top:7px" width="13" height="13" viewBox="0 0 13 13"><circle cx="8" cy="5" r="3.8" stroke="#222" stroke-width="1.1" fill="none"/><path d="M5.3 7.7L1 12" stroke="#222" stroke-width="1.3"/></svg>
 <div class="a" style="left:59px;top:8px;font-size:9.1px;color:#222;line-height:12px">Buscar</div>
 <div class="a" style="left:176px;top:20px;width:44px;height:7px;background:linear-gradient(90deg,#f0f0f0,#c9c2d0 40%,#c9c2d0 80%,#f0f0f0)"></div>
 <svg class="a" style="left:183px;top:3px" width="30" height="22" viewBox="0 0 30 22"><path d="M5 3L7 7Q4 10 6 13L9 14L9 21H11L12 15L19 15L20 21H22L22 13Q25 10 28 6L26 6Q23 10 20 10L12 10Q11 7 10 3L9 5Z" fill="#dcc39a"/><circle cx="8" cy="8" r="2.5" fill="#e9d8bb"/></svg>
 <svg class="a" style="left:233px;top:8px" width="13" height="11" viewBox="0 0 13 11"><path d="M0.5 0.7H12.5M0.5 10.3H12.5" stroke="#f2f2f2" stroke-width="1.2"/><rect x="1" y="3" width="7.5" height="5" stroke="#f2f2f2" stroke-width="1.2" fill="none"/><path d="M11 3V8" stroke="#f2f2f2" stroke-width="1.5"/></svg>
 <div class="a" style="left:265px;top:5px;width:18px;height:18px;border-radius:50%;background:conic-gradient(from 200deg,#0f6cbd,#1b9de2,#37c36b,#5fd38a,#1b9de2 60%,#0c5aa6)"></div>
 <div class="a" style="left:272px;top:12px;width:7px;height:6px;border-radius:50%;background:#1f292e"></div>
 <div class="a" style="left:299px;top:8px;width:15px;height:12px;background:linear-gradient(#f6d469,#e8bd3a);border-top:2px solid #d9a82a"></div>
 <div class="a" style="left:304px;top:14px;width:6px;height:6px;background:#7fb8d8"></div>
 <div class="a" style="left:331px;top:5px;width:17px;height:17px;border-radius:50%;background:linear-gradient(#7b4ad8,#e9863a 60%,#f0c24a)"></div>
 <svg class="a" style="left:335px;top:10px" width="9" height="8" viewBox="0 0 9 8"><path d="M1 1L4.5 7L8 1" stroke="#fff" stroke-width="1.6" fill="none"/></svg>
 <div class="a" style="left:364px;top:9px;width:16px;height:14px;background:#f4f4f4;border-radius:1px"></div>
 <div class="a" style="left:368px;top:5px;width:8px;height:5px;border:1.3px solid #9bbcc0;border-bottom:none;border-radius:2px 2px 0 0"></div>
 <div class="a" style="left:369px;top:13px;width:2.5px;height:2.5px;background:#e44;box-shadow:3.5px 0 0 #4a4,0 3.5px 0 #39f,3.5px 3.5px 0 #fb0"></div>
 <div class="a" style="left:396px;top:6px;width:17px;height:15px;background:linear-gradient(#1e6fc4 30%,#5fb6ea 30%,#9fd6f5)"></div>
 <div class="a" style="left:402px;top:13px;width:19px;height:11px;border-radius:6px;background:#222;border:1px solid #888;font-size:7.5px;color:#fff;line-height:9px;text-align:center;font-weight:bold">99+</div>
 <div class="a" style="left:429px;top:5px;width:18px;height:18px;border-radius:50%;background:conic-gradient(from -60deg,#db4437 0 120deg,#f4c20d 120deg 240deg,#0f9d58 240deg 360deg)"></div>
 <div class="a" style="left:433.5px;top:9.5px;width:9px;height:9px;border-radius:50%;background:#4285f4;border:1.6px solid #fff"></div>
 <svg class="a" style="left:462px;top:6px" width="15" height="15" viewBox="0 0 10 10"><path d="M5 0.3l1.1 1.4 1.7-.5.3 1.8 1.7.7-.7 1.6 1 1.5-1.6.9.1 1.8-1.8 0-.8 1.6-1.3-1.1-1.3 1.1-.8-1.6-1.8 0 .1-1.8-1.6-.9 1-1.5-.7-1.6 1.7-.7.3-1.8 1.7.5z" fill="#f4f4f4"/><circle cx="5" cy="5" r="2" fill="#1f292e"/></svg>
 <div class="a" style="left:487px;top:0;width:32px;height:27px;background:#3b4449"></div>
 <div class="a" style="left:495px;top:5px;width:16px;height:16px;border-radius:50%;background:#1a1a1a;border:1.2px solid #ddd"></div>
 <svg class="a" style="left:495px;top:5px" width="16" height="16" viewBox="0 0 16 16"><circle cx="8" cy="4.8" r="2.3" stroke="#bbb" stroke-width="0.9" fill="none"/><circle cx="5" cy="9.6" r="2.3" stroke="#bbb" stroke-width="0.9" fill="none"/><circle cx="10.8" cy="9.6" r="2.3" stroke="#bbb" stroke-width="0.9" fill="none"/></svg>
 <div class="a" style="left:502px;top:13px;width:10px;height:10px;border-radius:50%;background:#e8101c"></div>
 <div class="a" style="left:424px;top:25px;width:27px;height:2px;background:#9fb3c2"></div>
 <div class="a" style="left:456px;top:25px;width:27px;height:2px;background:#9fb3c2"></div>
 <div class="a" style="left:487px;top:25px;width:32px;height:2px;background:#a9bccb"></div>
 <svg class="a" style="left:1014px;top:5px" width="18" height="18" viewBox="0 0 18 18"><path d="M2 2H13L16 4.5L13 7H2Z" fill="#f0a020"/><path d="M3 6H14L16.5 8.5L14 11H3Z" fill="#e8901a"/><path d="M5 12L7.5 15L10 12" stroke="#3dc35a" stroke-width="1.4" fill="none"/></svg>
 <div class="a" style="left:1036px;top:8px;font-size:9px;letter-spacing:-0.35px;color:#fff;line-height:12px">GBP/EUR</div>
 <div class="a" style="left:1080px;top:8px;font-size:9px;color:#3dc35a;line-height:12px">+0.45%</div>
 <svg class="a" style="left:1121px;top:10px" width="10" height="7" viewBox="0 0 10 7"><path d="M1 6L5 2L9 6" stroke="#fff" stroke-width="1.1" fill="none"/></svg>
 <svg class="a" style="left:1137px;top:7px" width="11" height="14" viewBox="0 0 11 14"><rect x="2" y="1" width="7" height="9" rx="3" stroke="#fff" stroke-width="1.1" fill="none"/><path d="M5.5 10V13M3 13H8M1 6Q1 11 5.5 11Q10 11 10 6" stroke="#fff" stroke-width="1" fill="none"/></svg>
 <svg class="a" style="left:1152px;top:8px" width="14" height="12" viewBox="0 0 14 12"><path d="M1 11A10 10 0 0 1 11 1M3.5 11A7.5 7.5 0 0 1 11 3.5M6 11A5 5 0 0 1 11 6" stroke="#ddd" stroke-width="1.1" fill="none"/><circle cx="11" cy="11" r="1" fill="#ddd"/></svg>
 <svg class="a" style="left:1167px;top:7px" width="14" height="13" viewBox="0 0 14 13"><path d="M1 4.5H3.5L7 1.5V11.5L3.5 8.5H1Z" stroke="#fff" stroke-width="1.1" fill="none"/><path d="M9 4.5Q10.5 6.5 9 8.5M10.8 3Q13.3 6.5 10.8 10" stroke="#fff" stroke-width="1" fill="none"/></svg>
 <svg class="a" style="left:1183px;top:7px" width="15" height="14" viewBox="0 0 15 14"><rect x="1" y="1" width="11" height="10" stroke="#fff" stroke-width="1.1" fill="none"/><path d="M3.5 8.5L8 4M5 4H8V7" stroke="#fff" stroke-width="1" fill="none"/><circle cx="11.5" cy="10.5" r="2.6" fill="#f0a020"/></svg>
 <div class="a" style="left:1201px;top:1px;width:40px;font-size:8.5px;letter-spacing:-0.3px;color:#fff;text-align:center;line-height:12px">16:54<br>11/06/2023</div>
 <svg class="a" style="left:1250px;top:5px" width="18" height="18" viewBox="0 0 18 18"><path d="M1 1.5H14V10.5H6L3 13.5V10.5H1Z" stroke="#fff" stroke-width="1.1" fill="none"/><path d="M3.5 4.5H11.5M3.5 7H11.5" stroke="#fff" stroke-width="1"/><circle cx="12.5" cy="13" r="4" fill="#1f292e" stroke="#ccc" stroke-width="0.9"/><text x="12.5" y="15.8" font-size="7" fill="#fff" text-anchor="middle" font-family="Liberation Sans">3</text></svg>
</div>
<!-- OBS -->
<div class="a" style="left:293px;top:127px;width:721px;height:507px;background:#1c1d26;box-shadow:0 0 10px rgba(0,0,0,.28);border:1px solid #555;border-top-color:#8a8a8a"></div>
<div class="a otb" style="left:294px;top:128px;width:719px;height:20px;background:#fff"></div>
<div class="a" style="left:300px;top:132px;width:10px;height:10px;border-radius:50%;background:#121212"></div>
<svg class="a" style="left:300px;top:132px" width="10" height="10" viewBox="0 0 10 10"><path d="M3.6 2.8A1.8 1.8 0 1 1 6.2 4.1M4.2 7.4A1.8 1.8 0 1 1 2.4 4.6M7.6 4.6A1.8 1.8 0 1 1 5.6 7.3" stroke="#eee" stroke-width="0.9" fill="none"/></svg>
<div class="a" style="left:314px;top:132px;font-size:8px;letter-spacing:-0.25px;color:#555;line-height:11px">OBS 29.1.2 - Perfil: Sin Título - Escenas: Sin Título</div>
<div class="a" style="left:934px;top:137px;width:8px;height:1px;background:#444"></div>
<div class="a" style="left:964px;top:134px;width:7px;height:7px;border:1px solid #444"></div>
<svg class="a" style="left:994px;top:134px" width="8" height="8" viewBox="0 0 8 8"><path d="M0.5 0.5L7.5 7.5M7.5 0.5L0.5 7.5" stroke="#444" stroke-width="1"/></svg>
<div class="a omenu" style="left:294px;top:148px;width:719px;height:17px">
 <span style="left:5px">Archivo (F)</span><span style="left:57px">Editar</span><span style="left:92px">Vista</span><span style="left:122px">Paneles (D)</span><span style="left:176px;color:#8a8a93">Perfil</span><span style="left:208px;letter-spacing:-0.25px">Colección de Escenas</span><span style="left:301px">Herramientas</span><span style="left:367px">Ayuda (H)</span>
</div>
<div class="a" style="left:445px;top:171px;width:416px;height:234px;overflow:hidden;background:#fff"><div class="a lv" style="left:0;top:0;width:1280px;height:720px;background:#fff;transform:scale(0.325);transform-origin:0 0"><div class="a" style="left:0;top:0;width:1280px;height:46px;background:#e6e8eb"></div><div class="a" style="left:293px;top:127px;width:721px;height:507px;background:#22242c"></div><div class="a" style="left:294px;top:128px;width:719px;height:20px;background:#f4f4f4"></div><div class="a" style="left:445px;top:171px;width:416px;height:234px;background:#fff"></div><div class="a" style="left:540px;top:212px;width:235px;height:165px;background:#24262e"></div><div class="a" style="left:590px;top:226px;width:135px;height:76px;background:#e8e8e8"></div><div class="a" style="left:296px;top:469px;width:135px;height:22px;background:#3050c6"></div><div class="a" style="left:887px;top:498px;width:123px;height:25px;background:#3050c6"></div><div class="a" style="left:0;top:649px;width:1268px;height:44px;background:#020c2e"></div><div class="a" style="left:0;top:692px;width:1280px;height:28px;background:#1f292e"></div></div></div>
<!-- source toolbar -->
<div class="a" style="left:294px;top:413px;width:719px;height:32px;background:#2a2c35"></div>
<div class="a" style="left:294px;top:445px;width:719px;height:1px;background:#1f2129"></div>
<div class="a ot" style="left:300px;top:424px;width:108px;overflow:hidden">Ninguna fuente seleccionada</div>
<div class="a" style="left:436px;top:419px;width:79px;height:20px;background:#1f2129;border-radius:3px"></div>
<svg class="a" style="left:444px;top:424px" width="10" height="10" viewBox="0 0 10 10"><path d="M5 0.5l1 1.3 1.6-.4.3 1.6 1.6.6-.6 1.5.9 1.4-1.5.8.1 1.6-1.6 0-.7 1.5-1.2-1-1.2 1-.7-1.5-1.6 0 .1-1.6-1.5-.8.9-1.4-.6-1.5 1.6-.6.3-1.6 1.6.4z" fill="#f4f4f4"/><circle cx="5" cy="5" r="1.7" fill="#1f2129"/></svg>
<div class="a ot" style="left:456px;top:423px;color:#b9bac2">Propiedades</div>
<div class="a" style="left:519px;top:419px;width:55px;height:20px;background:#1f2129;border-radius:3px"></div>
<div class="a" style="left:528px;top:424px;width:9px;height:10px;background:linear-gradient(90deg,#ddd 0 35%,#555 35% 65%,#ccc 65%);border:1px solid #eee"></div>
<div class="a ot" style="left:540px;top:423px;color:#b9bac2">Filtros</div>
<!-- dock frames -->
<div class="a" style="left:294px;top:446px;width:719px;height:170px;background:#21232b"></div>
<div class="dk" style="left:294px;top:446px;width:139px;height:170px"></div>
<div class="dkt" style="left:294px;top:446px;width:139px">Escenas</div>
<svg class="a" style="left:419px;top:451px" width="11" height="11" viewBox="0 0 11 11"><path d="M0.7 0.7H7V2.5M0.7 0.7V6.5H3" stroke="#eee" stroke-width="1.2" fill="none"/><rect x="3.6" y="3.6" width="6.7" height="6.7" stroke="#eee" stroke-width="1.2" fill="none"/><path d="M3.6 5.2H10.3" stroke="#eee" stroke-width="1.2"/></svg>
<div class="a" style="left:296px;top:469px;width:135px;height:22px;background:#3050c6;border-radius:1px"></div>
<div class="a ot" style="left:302px;top:474px;color:#f0f2ff">Escena</div>
<div class="tbtn" style="left:299px;top:596px;width:20px;height:19px;background:#2d303a"></div>
<div class="tbtn" style="left:322px;top:596px;width:21px;height:19px;background:#2d303a"></div>
<div class="tbtn" style="left:351px;top:596px;width:18px;height:19px;background:#2d303a"></div>
<div class="tbtn" style="left:376px;top:596px;width:21px;height:19px;background:#2d303a"></div>
<div class="tbtn" style="left:400px;top:596px;width:21px;height:19px;background:#2d303a"></div>
<svg class="a" style="left:304px;top:600px" width="10" height="10" viewBox="0 0 10 10"><path d="M5 0.5V9.5M0.5 5H9.5" stroke="#f2f2f2" stroke-width="1.4"/></svg>
<svg class="a" style="left:328px;top:599px" width="10" height="12" viewBox="0 0 10 12"><path d="M0.5 2.3H9.5M3.3 2V0.7H6.7V2" stroke="#f6f6f6" stroke-width="1.3" fill="none"/><path d="M1.6 3.4H8.4V11.2H1.6Z" stroke="#f6f6f6" stroke-width="1.5" fill="none"/><path d="M4 5V9.6M6 5V9.6" stroke="#f6f6f6" stroke-width="1"/></svg>
<svg class="a" style="left:354px;top:600px" width="10" height="10" viewBox="0 0 10 10"><rect x="0.6" y="0.6" width="8.8" height="8.8" stroke="#eee" stroke-width="1.2" fill="#555"/><rect x="1.5" y="1.5" width="3" height="7" fill="#ddd"/><path d="M6 2V8" stroke="#ccc" stroke-width="1"/></svg>
<svg class="a" style="left:380px;top:601px" width="12" height="8" viewBox="0 0 12 8"><path d="M1 6.5L6 1.8L11 6.5" stroke="#eee" stroke-width="1.4" fill="none"/></svg>
<svg class="a" style="left:404px;top:601px" width="12" height="8" viewBox="0 0 12 8"><path d="M1 1.5L6 6.2L11 1.5" stroke="#eee" stroke-width="1.4" fill="none"/></svg>
<div class="dk" style="left:436px;top:446px;width:144px;height:170px"></div>
<div class="dkt" style="left:436px;top:446px;width:144px">Fuentes</div>
<svg class="a" style="left:567px;top:451px" width="11" height="11" viewBox="0 0 11 11"><path d="M0.7 0.7H7V2.5M0.7 0.7V6.5H3" stroke="#eee" stroke-width="1.2" fill="none"/><rect x="3.6" y="3.6" width="6.7" height="6.7" stroke="#eee" stroke-width="1.2" fill="none"/><path d="M3.6 5.2H10.3" stroke="#eee" stroke-width="1.2"/></svg>
<svg class="a" style="left:444px;top:474px" width="12" height="11" viewBox="0 0 12 11"><rect x="0.7" y="0.7" width="10.6" height="7.6" rx="1.5" stroke="#eee" stroke-width="1.3" fill="none"/><path d="M3 10.3H9" stroke="#eee" stroke-width="1.2"/></svg>
<div class="a ot" style="left:460px;top:474px;width:77px;overflow:hidden;color:#e8e8e8">Captura de pantalla</div>
<svg class="a" style="left:539px;top:475px" width="12" height="9" viewBox="0 0 12 9"><path d="M0.5 4.5Q6 -2 11.5 4.5Q6 11 0.5 4.5Z" fill="#f2f2f2"/><circle cx="6" cy="4.5" r="2" fill="#272a33"/><circle cx="6" cy="4.5" r="1" fill="#f2f2f2"/></svg>
<svg class="a" style="left:559px;top:473px" width="9" height="12" viewBox="0 0 9 12"><path d="M2.2 5.5V3.2A2.3 2.3 0 0 1 6.8 3.2V3.8" stroke="#aaa" stroke-width="1.3" fill="none"/><rect x="0.5" y="5.5" width="8" height="6" fill="#aaa"/></svg>
<div class="tbtn" style="left:440px;top:596px;width:20px;height:19px;background:#2d303a"></div>
<div class="tbtn" style="left:463px;top:596px;width:21px;height:19px;background:#2d303a"></div>
<div class="tbtn" style="left:490px;top:596px;width:21px;height:19px;background:#2d303a"></div>
<div class="tbtn" style="left:517px;top:596px;width:22px;height:19px;background:#2d303a"></div>
<div class="tbtn" style="left:540px;top:596px;width:22px;height:19px;background:#2d303a"></div>
<svg class="a" style="left:445px;top:600px" width="10" height="10" viewBox="0 0 10 10"><path d="M5 0.5V9.5M0.5 5H9.5" stroke="#f2f2f2" stroke-width="1.4"/></svg>
<svg class="a" style="left:468px;top:599px" width="10" height="12" viewBox="0 0 10 12"><path d="M0.5 2.3H9.5M3.3 2V0.7H6.7V2" stroke="#f6f6f6" stroke-width="1.3" fill="none"/><path d="M1.6 3.4H8.4V11.2H1.6Z" stroke="#f6f6f6" stroke-width="1.5" fill="none"/><path d="M4 5V9.6M6 5V9.6" stroke="#f6f6f6" stroke-width="1"/></svg>
<svg class="a" style="left:495px;top:600px" width="10" height="10" viewBox="0 0 10 10"><path d="M5 0.3l1.1 1.4 1.7-.5.3 1.8 1.7.7-.7 1.6 1 1.5-1.6.9.1 1.8-1.8 0-.8 1.6-1.3-1.1-1.3 1.1-.8-1.6-1.8 0 .1-1.8-1.6-.9 1-1.5-.7-1.6 1.7-.7.3-1.8 1.7.5z" fill="#f2f2f2"/><circle cx="5" cy="5" r="1.6" fill="#2d303a"/></svg>
<svg class="a" style="left:522px;top:601px" width="12" height="8" viewBox="0 0 12 8"><path d="M1 6.5L6 1.8L11 6.5" stroke="#eee" stroke-width="1.4" fill="none"/></svg>
<svg class="a" style="left:545px;top:601px" width="12" height="8" viewBox="0 0 12 8"><path d="M1 1.5L6 6.2L11 1.5" stroke="#eee" stroke-width="1.4" fill="none"/></svg>
<div class="dk" style="left:583px;top:446px;width:187px;height:170px"></div>
<div class="dkt" style="left:583px;top:446px;width:187px">Mezclador de audio</div>
<svg class="a" style="left:759px;top:451px" width="11" height="11" viewBox="0 0 11 11"><path d="M0.7 0.7H7V2.5M0.7 0.7V6.5H3" stroke="#eee" stroke-width="1.2" fill="none"/><rect x="3.6" y="3.6" width="6.7" height="6.7" stroke="#eee" stroke-width="1.2" fill="none"/><path d="M3.6 5.2H10.3" stroke="#eee" stroke-width="1.2"/></svg>
<div class="a ot" style="left:586px;top:471px;color:#ececec">Audio del escritorio</div>
<div class="a ot" style="left:743.5px;top:471px;color:#ececec">0.0 dB</div>
<div class="a" style="left:590px;top:484px;width:154px;height:2px;background:#747474"></div>
<div class="a" style="left:744px;top:484px;width:25px;height:3px;background:#3b3d46"></div>
<div class="sc" style="left:587px;top:489px">-60</div>
<div class="sc" style="left:587px;top:537px">-60</div>
<div class="sc" style="left:602px;top:489px">-55</div>
<div class="sc" style="left:602px;top:537px">-55</div>
<div class="sc" style="left:617px;top:489px">-50</div>
<div class="sc" style="left:617px;top:537px">-50</div>
<div class="sc" style="left:632px;top:489px">-45</div>
<div class="sc" style="left:632px;top:537px">-45</div>
<div class="sc" style="left:647px;top:489px">-40</div>
<div class="sc" style="left:647px;top:537px">-40</div>
<div class="sc" style="left:661px;top:489px">-35</div>
<div class="sc" style="left:661px;top:537px">-35</div>
<div class="sc" style="left:676px;top:489px">-30</div>
<div class="sc" style="left:676px;top:537px">-30</div>
<div class="sc" style="left:691px;top:489px">-25</div>
<div class="sc" style="left:691px;top:537px">-25</div>
<div class="sc" style="left:706px;top:489px">-20</div>
<div class="sc" style="left:706px;top:537px">-20</div>
<div class="sc" style="left:721px;top:489px">-15</div>
<div class="sc" style="left:721px;top:537px">-15</div>
<div class="sc" style="left:736px;top:489px">-10</div>
<div class="sc" style="left:736px;top:537px">-10</div>
<div class="sc" style="left:753px;top:489px">-5</div>
<div class="sc" style="left:753px;top:537px">-5</div>
<div class="sc" style="left:765px;top:489px">0</div>
<div class="sc" style="left:765px;top:537px">0</div>
<div class="a" style="left:586px;top:504px;width:128px;height:3px;background:#3f7fd4;border-radius:2px"></div>
<div class="a" style="left:712px;top:502px;width:12px;height:7px;background:#f4f4f4;border-radius:3px"></div>
<svg class="a" style="left:727px;top:501px" width="14" height="10" viewBox="0 0 14 10"><path d="M1 3H3.5L7 0.5V9.5L3.5 7H1Z" fill="#c0141e"/><path d="M8.5 3L12.5 7M12.5 3L8.5 7" stroke="#c0141e" stroke-width="1.4"/></svg>
<div class="tbtn" style="left:745px;top:497px;width:24px;height:18px;background:#2f323c"></div>
<div class="a" style="left:755.5px;top:500.5px;width:3px;height:3px;border-radius:50%;background:#eee;box-shadow:0 4px 0 #eee,0 8px 0 #eee"></div>
<div class="a ot" style="left:586px;top:521px;color:#ececec">Mic/Aux</div>
<div class="a ot" style="left:743.5px;top:521px;color:#ececec">0.0 dB</div>
<div class="a" style="left:587px;top:534px;width:157px;height:2px;background:#5d8a2a"></div>
<div class="a" style="left:744px;top:534px;width:25px;height:2px;background:#8a2b30"></div>
<div class="a" style="left:586px;top:552px;width:128px;height:3px;background:#3f7fd4;border-radius:2px"></div>
<div class="a" style="left:712px;top:550px;width:12px;height:7px;background:#f4f4f4;border-radius:3px"></div>
<svg class="a" style="left:728px;top:548px" width="13" height="11" viewBox="0 0 13 11"><path d="M1 3.5H3.5L7 0.8V10.2L3.5 7.5H1Z" fill="#f4f4f4"/><path d="M8.8 3.5Q10 5.5 8.8 7.5M10.5 2Q12.5 5.5 10.5 9" stroke="#f4f4f4" stroke-width="1.1" fill="none"/></svg>
<div class="tbtn" style="left:745px;top:545px;width:24px;height:18px;background:#2f323c"></div>
<div class="a" style="left:755.5px;top:548.5px;width:3px;height:3px;border-radius:50%;background:#eee;box-shadow:0 4px 0 #eee,0 8px 0 #eee"></div>
<div class="tbtn" style="left:585px;top:595px;width:23px;height:19px;background:#2d303a"></div>
<div class="tbtn" style="left:615px;top:595px;width:19px;height:19px;background:#2d303a"></div>
<svg class="a" style="left:590px;top:598px" width="14" height="12" viewBox="0 0 14 12"><circle cx="4.5" cy="7.5" r="2.8" fill="#eee"/><circle cx="4.5" cy="7.5" r="1" fill="#2d303a"/><circle cx="10" cy="3.5" r="2" fill="#eee"/><circle cx="10" cy="3.5" r="0.7" fill="#2d303a"/></svg>
<div class="a" style="left:622.5px;top:599.5px;width:3px;height:3px;border-radius:50%;background:#eee;box-shadow:0 4px 0 #eee,0 8px 0 #eee"></div>
<div class="dk" style="left:776px;top:446px;width:106px;height:170px"></div>
<div class="dkt" style="left:776px;top:446px;width:106px">Transiciones d...</div>
<svg class="a" style="left:868px;top:451px" width="11" height="11" viewBox="0 0 11 11"><path d="M0.7 0.7H7V2.5M0.7 0.7V6.5H3" stroke="#eee" stroke-width="1.2" fill="none"/><rect x="3.6" y="3.6" width="6.7" height="6.7" stroke="#eee" stroke-width="1.2" fill="none"/><path d="M3.6 5.2H10.3" stroke="#eee" stroke-width="1.2"/></svg>
<div class="a" style="left:781px;top:472px;width:95px;height:18px;background:#30333d;border-radius:3px"></div>
<div class="a ot" style="left:788px;top:474px;color:#d8d8dc">Desvanecimiento</div>
<svg class="a" style="left:865px;top:474px" width="8" height="13" viewBox="0 0 8 13"><path d="M1.5 5L4 2.5L6.5 5M1.5 8L4 10.5L6.5 8" stroke="#ccc" stroke-width="1" fill="none"/></svg>
<div class="a ot" style="left:780px;top:498px;color:#d8d8dc">Duración</div>
<div class="a" style="left:818px;top:494px;width:58px;height:19px;background:#30333d;border-radius:3px"></div>
<div class="a ot" style="left:824px;top:498px;color:#ececec">300 ms</div>
<svg class="a" style="left:863px;top:495px" width="10" height="17" viewBox="0 0 10 17"><path d="M2 5.5L5 2.5L8 5.5M2 11.5L5 14.5L8 11.5" stroke="#ccc" stroke-width="1.1" fill="none"/></svg>
<div class="tbtn" style="left:801px;top:518px;width:22px;height:17px;background:#2d303a"></div>
<div class="tbtn" style="left:830px;top:518px;width:18px;height:17px;background:#24262e"></div>
<div class="tbtn" style="left:856px;top:518px;width:19px;height:17px;background:#22242b"></div>
<svg class="a" style="left:807px;top:521px" width="10" height="10" viewBox="0 0 10 10"><path d="M5 0.5V9.5M0.5 5H9.5" stroke="#f2f2f2" stroke-width="1.4"/></svg>
<svg class="a" style="left:834px;top:520px" width="10" height="12" viewBox="0 0 10 12"><path d="M0.5 2.3H9.5M3.3 2V0.7H6.7V2" stroke="#f6f6f6" stroke-width="1.3" fill="none"/><path d="M1.6 3.4H8.4V11.2H1.6Z" stroke="#f6f6f6" stroke-width="1.5" fill="none"/><path d="M4 5V9.6M6 5V9.6" stroke="#f6f6f6" stroke-width="1"/></svg>
<div class="a" style="left:864.5px;top:520.5px;width:3px;height:3px;border-radius:50%;background:#eee;box-shadow:0 4px 0 #eee,0 8px 0 #eee"></div>
<div class="dk" style="left:884px;top:446px;width:129px;height:170px"></div>
<div class="dkt" style="left:884px;top:446px;width:129px">Controles</div>
<svg class="a" style="left:1000px;top:451px" width="11" height="11" viewBox="0 0 11 11"><path d="M0.7 0.7H7V2.5M0.7 0.7V6.5H3" stroke="#eee" stroke-width="1.2" fill="none"/><rect x="3.6" y="3.6" width="6.7" height="6.7" stroke="#eee" stroke-width="1.2" fill="none"/><path d="M3.6 5.2H10.3" stroke="#eee" stroke-width="1.2"/></svg>
<div class="cb" style="left:887px;top:471px;width:123px;height:23px;line-height:23px;background:#31343e">Iniciar Transmisión</div>
<div class="cb" style="left:887px;top:498px;width:123px;height:25px;line-height:25px;background:#3050c6">Detener Grabación</div>
<div class="cb" style="left:887px;top:527px;width:100px;height:19px;line-height:19px;background:#31343e">niciar Cámara Virtua</div>
<div class="cb" style="left:887px;top:549px;width:123px;height:20px;line-height:20px;background:#31343e">Modo Estudio</div>
<div class="cb" style="left:887px;top:572px;width:123px;height:19px;line-height:19px;background:#31343e">Ajustes</div>
<div class="cb" style="left:887px;top:594px;width:123px;height:20px;line-height:20px;background:#31343e">Salir</div>
<div class="tbtn" style="left:991px;top:527px;width:19px;height:19px;background:#31343e"></div>
<svg class="a" style="left:995px;top:531px" width="10" height="10" viewBox="0 0 10 10"><path d="M5 0.3l1.1 1.4 1.7-.5.3 1.8 1.7.7-.7 1.6 1 1.5-1.6.9.1 1.8-1.8 0-.8 1.6-1.3-1.1-1.3 1.1-.8-1.6-1.8 0 .1-1.8-1.6-.9 1-1.5-.7-1.6 1.7-.7.3-1.8 1.7.5z" fill="#f2f2f2"/><circle cx="5" cy="5" r="1.6" fill="#31343e"/></svg>
<!-- status -->
<div class="a" style="left:294px;top:616px;width:719px;height:17px;background:#1f2129"></div>
<svg class="a" style="left:725px;top:620px" width="14" height="12" viewBox="0 0 14 12"><path d="M3 1.5Q0 6 3 10.5M5 3Q3.3 6 5 9M11 1.5Q14 6 11 10.5M9 3Q10.7 6 9 9" stroke="#9a9a9a" stroke-width="1.2" fill="none"/><path d="M2 11L12 1" stroke="#bbb" stroke-width="1.3"/></svg>
<div class="a ost" style="left:743px">LIVE: 00:00:00</div>
<div class="a" style="left:803.5px;top:623px;width:6px;height:6px;border-radius:45%;background:#c0102a;box-shadow:0 0 2px #801020"></div>
<div class="a ost" style="left:817px">REC: 00:00:06</div>
<div class="a ost" style="left:886px">CPU: 8.3%, 30.00 fps</div>
<div class="a" style="left:1006px;top:626px;width:5px;height:5px;background:linear-gradient(135deg,transparent 50%,#999 50%)"></div>
<!-- cursor -->
<svg class="a" style="left:969px;top:115px" width="9" height="12" viewBox="0 0 9 12"><path d="M0.6 0.6V12L3.3 9.3L4.6 12H7L5.4 8.4H8.5Z" fill="#fff" stroke="#333" stroke-width="0.9"/></svg>
</div>
</div></div>
<!-- source toolbar -->
<div class="a" style="left:294px;top:413px;width:719px;height:32px;background:#2a2c35"></div>
<div class="a" style="left:294px;top:445px;width:719px;height:1px;background:#1f2129"></div>
<div class="a ot" style="left:300px;top:424px;width:108px;overflow:hidden">Ninguna fuente seleccionada</div>
<div class="a" style="left:436px;top:419px;width:79px;height:20px;background:#1f2129;border-radius:3px"></div>
<svg class="a" style="left:444px;top:424px" width="10" height="10" viewBox="0 0 10 10"><path d="M5 0.5l1 1.3 1.6-.4.3 1.6 1.6.6-.6 1.5.9 1.4-1.5.8.1 1.6-1.6 0-.7 1.5-1.2-1-1.2 1-.7-1.5-1.6 0 .1-1.6-1.5-.8.9-1.4-.6-1.5 1.6-.6.3-1.6 1.6.4z" fill="#f4f4f4"/><circle cx="5" cy="5" r="1.7" fill="#1f2129"/></svg>
<div class="a ot" style="left:456px;top:423px;color:#b9bac2">Propiedades</div>
<div class="a" style="left:519px;top:419px;width:55px;height:20px;background:#1f2129;border-radius:3px"></div>
<div class="a" style="left:528px;top:424px;width:9px;height:10px;background:linear-gradient(90deg,#ddd 0 35%,#555 35% 65%,#ccc 65%);border:1px solid #eee"></div>
<div class="a ot" style="left:540px;top:423px;color:#b9bac2">Filtros</div>
<!-- dock frames -->
<div class="a" style="left:294px;top:446px;width:719px;height:170px;background:#21232b"></div>
<div class="dk" style="left:294px;top:446px;width:139px;height:170px"></div>
<div class="dkt" style="left:294px;top:446px;width:139px">Escenas</div>
<svg class="a" style="left:419px;top:451px" width="11" height="11" viewBox="0 0 11 11"><path d="M0.7 0.7H7V2.5M0.7 0.7V6.5H3" stroke="#eee" stroke-width="1.2" fill="none"/><rect x="3.6" y="3.6" width="6.7" height="6.7" stroke="#eee" stroke-width="1.2" fill="none"/><path d="M3.6 5.2H10.3" stroke="#eee" stroke-width="1.2"/></svg>
<div class="a" style="left:296px;top:469px;width:135px;height:22px;background:#3050c6;border-radius:1px"></div>
<div class="a ot" style="left:302px;top:474px;color:#f0f2ff">Escena</div>
<div class="tbtn" style="left:299px;top:596px;width:20px;height:19px;background:#2d303a"></div>
<div class="tbtn" style="left:322px;top:596px;width:21px;height:19px;background:#2d303a"></div>
<div class="tbtn" style="left:351px;top:596px;width:18px;height:19px;background:#2d303a"></div>
<div class="tbtn" style="left:376px;top:596px;width:21px;height:19px;background:#2d303a"></div>
<div class="tbtn" style="left:400px;top:596px;width:21px;height:19px;background:#2d303a"></div>
<svg class="a" style="left:304px;top:600px" width="10" height="10" viewBox="0 0 10 10"><path d="M5 0.5V9.5M0.5 5H9.5" stroke="#f2f2f2" stroke-width="1.4"/></svg>
<svg class="a" style="left:328px;top:599px" width="10" height="12" viewBox="0 0 10 12"><path d="M0.5 2.3H9.5M3.3 2V0.7H6.7V2" stroke="#f6f6f6" stroke-width="1.3" fill="none"/><path d="M1.6 3.4H8.4V11.2H1.6Z" stroke="#f6f6f6" stroke-width="1.5" fill="none"/><path d="M4 5V9.6M6 5V9.6" stroke="#f6f6f6" stroke-width="1"/></svg>
<svg class="a" style="left:354px;top:600px" width="10" height="10" viewBox="0 0 10 10"><rect x="0.6" y="0.6" width="8.8" height="8.8" stroke="#eee" stroke-width="1.2" fill="#555"/><rect x="1.5" y="1.5" width="3" height="7" fill="#ddd"/><path d="M6 2V8" stroke="#ccc" stroke-width="1"/></svg>
<svg class="a" style="left:380px;top:601px" width="12" height="8" viewBox="0 0 12 8"><path d="M1 6.5L6 1.8L11 6.5" stroke="#eee" stroke-width="1.4" fill="none"/></svg>
<svg class="a" style="left:404px;top:601px" width="12" height="8" viewBox="0 0 12 8"><path d="M1 1.5L6 6.2L11 1.5" stroke="#eee" stroke-width="1.4" fill="none"/></svg>
<div class="dk" style="left:436px;top:446px;width:144px;height:170px"></div>
<div class="dkt" style="left:436px;top:446px;width:144px">Fuentes</div>
<svg class="a" style="left:567px;top:451px" width="11" height="11" viewBox="0 0 11 11"><path d="M0.7 0.7H7V2.5M0.7 0.7V6.5H3" stroke="#eee" stroke-width="1.2" fill="none"/><rect x="3.6" y="3.6" width="6.7" height="6.7" stroke="#eee" stroke-width="1.2" fill="none"/><path d="M3.6 5.2H10.3" stroke="#eee" stroke-width="1.2"/></svg>
<svg class="a" style="left:444px;top:474px" width="12" height="11" viewBox="0 0 12 11"><rect x="0.7" y="0.7" width="10.6" height="7.6" rx="1.5" stroke="#eee" stroke-width="1.3" fill="none"/><path d="M3 10.3H9" stroke="#eee" stroke-width="1.2"/></svg>
<div class="a ot" style="left:460px;top:474px;width:77px;overflow:hidden;color:#e8e8e8">Captura de pantalla</div>
<svg class="a" style="left:539px;top:475px" width="12" height="9" viewBox="0 0 12 9"><path d="M0.5 4.5Q6 -2 11.5 4.5Q6 11 0.5 4.5Z" fill="#f2f2f2"/><circle cx="6" cy="4.5" r="2" fill="#272a33"/><circle cx="6" cy="4.5" r="1" fill="#f2f2f2"/></svg>
<svg class="a" style="left:559px;top:473px" width="9" height="12" viewBox="0 0 9 12"><path d="M2.2 5.5V3.2A2.3 2.3 0 0 1 6.8 3.2V3.8" stroke="#aaa" stroke-width="1.3" fill="none"/><rect x="0.5" y="5.5" width="8" height="6" fill="#aaa"/></svg>
<div class="tbtn" style="left:440px;top:596px;width:20px;height:19px;background:#2d303a"></div>
<div class="tbtn" style="left:463px;top:596px;width:21px;height:19px;background:#2d303a"></div>
<div class="tbtn" style="left:490px;top:596px;width:21px;height:19px;background:#2d303a"></div>
<div class="tbtn" style="left:517px;top:596px;width:22px;height:19px;background:#2d303a"></div>
<div class="tbtn" style="left:540px;top:596px;width:22px;height:19px;background:#2d303a"></div>
<svg class="a" style="left:445px;top:600px" width="10" height="10" viewBox="0 0 10 10"><path d="M5 0.5V9.5M0.5 5H9.5" stroke="#f2f2f2" stroke-width="1.4"/></svg>
<svg class="a" style="left:468px;top:599px" width="10" height="12" viewBox="0 0 10 12"><path d="M0.5 2.3H9.5M3.3 2V0.7H6.7V2" stroke="#f6f6f6" stroke-width="1.3" fill="none"/><path d="M1.6 3.4H8.4V11.2H1.6Z" stroke="#f6f6f6" stroke-width="1.5" fill="none"/><path d="M4 5V9.6M6 5V9.6" stroke="#f6f6f6" stroke-width="1"/></svg>
<svg class="a" style="left:495px;top:600px" width="10" height="10" viewBox="0 0 10 10"><path d="M5 0.3l1.1 1.4 1.7-.5.3 1.8 1.7.7-.7 1.6 1 1.5-1.6.9.1 1.8-1.8 0-.8 1.6-1.3-1.1-1.3 1.1-.8-1.6-1.8 0 .1-1.8-1.6-.9 1-1.5-.7-1.6 1.7-.7.3-1.8 1.7.5z" fill="#f2f2f2"/><circle cx="5" cy="5" r="1.6" fill="#2d303a"/></svg>
<svg class="a" style="left:522px;top:601px" width="12" height="8" viewBox="0 0 12 8"><path d="M1 6.5L6 1.8L11 6.5" stroke="#eee" stroke-width="1.4" fill="none"/></svg>
<svg class="a" style="left:545px;top:601px" width="12" height="8" viewBox="0 0 12 8"><path d="M1 1.5L6 6.2L11 1.5" stroke="#eee" stroke-width="1.4" fill="none"/></svg>
<div class="dk" style="left:583px;top:446px;width:187px;height:170px"></div>
<div class="dkt" style="left:583px;top:446px;width:187px">Mezclador de audio</div>
<svg class="a" style="left:759px;top:451px" width="11" height="11" viewBox="0 0 11 11"><path d="M0.7 0.7H7V2.5M0.7 0.7V6.5H3" stroke="#eee" stroke-width="1.2" fill="none"/><rect x="3.6" y="3.6" width="6.7" height="6.7" stroke="#eee" stroke-width="1.2" fill="none"/><path d="M3.6 5.2H10.3" stroke="#eee" stroke-width="1.2"/></svg>
<div class="a ot" style="left:586px;top:471px;color:#ececec">Audio del escritorio</div>
<div class="a ot" style="left:743.5px;top:471px;color:#ececec">0.0 dB</div>
<div class="a" style="left:590px;top:484px;width:154px;height:2px;background:#747474"></div>
<div class="a" style="left:744px;top:484px;width:25px;height:3px;background:#3b3d46"></div>
<div class="sc" style="left:587px;top:489px">-60</div>
<div class="sc" style="left:587px;top:537px">-60</div>
<div class="sc" style="left:602px;top:489px">-55</div>
<div class="sc" style="left:602px;top:537px">-55</div>
<div class="sc" style="left:617px;top:489px">-50</div>
<div class="sc" style="left:617px;top:537px">-50</div>
<div class="sc" style="left:632px;top:489px">-45</div>
<div class="sc" style="left:632px;top:537px">-45</div>
<div class="sc" style="left:647px;top:489px">-40</div>
<div class="sc" style="left:647px;top:537px">-40</div>
<div class="sc" style="left:661px;top:489px">-35</div>
<div class="sc" style="left:661px;top:537px">-35</div>
<div class="sc" style="left:676px;top:489px">-30</div>
<div class="sc" style="left:676px;top:537px">-30</div>
<div class="sc" style="left:691px;top:489px">-25</div>
<div class="sc" style="left:691px;top:537px">-25</div>
<div class="sc" style="left:706px;top:489px">-20</div>
<div class="sc" style="left:706px;top:537px">-20</div>
<div class="sc" style="left:721px;top:489px">-15</div>
<div class="sc" style="left:721px;top:537px">-15</div>
<div class="sc" style="left:736px;top:489px">-10</div>
<div class="sc" style="left:736px;top:537px">-10</div>
<div class="sc" style="left:753px;top:489px">-5</div>
<div class="sc" style="left:753px;top:537px">-5</div>
<div class="sc" style="left:765px;top:489px">0</div>
<div class="sc" style="left:765px;top:537px">0</div>
<div class="a" style="left:586px;top:504px;width:128px;height:3px;background:#3f7fd4;border-radius:2px"></div>
<div class="a" style="left:712px;top:502px;width:12px;height:7px;background:#f4f4f4;border-radius:3px"></div>
<svg class="a" style="left:727px;top:501px" width="14" height="10" viewBox="0 0 14 10"><path d="M1 3H3.5L7 0.5V9.5L3.5 7H1Z" fill="#c0141e"/><path d="M8.5 3L12.5 7M12.5 3L8.5 7" stroke="#c0141e" stroke-width="1.4"/></svg>
<div class="tbtn" style="left:745px;top:497px;width:24px;height:18px;background:#2f323c"></div>
<div class="a" style="left:755.5px;top:500.5px;width:3px;height:3px;border-radius:50%;background:#eee;box-shadow:0 4px 0 #eee,0 8px 0 #eee"></div>
<div class="a ot" style="left:586px;top:521px;color:#ececec">Mic/Aux</div>
<div class="a ot" style="left:743.5px;top:521px;color:#ececec">0.0 dB</div>
<div class="a" style="left:587px;top:534px;width:157px;height:2px;background:#5d8a2a"></div>
<div class="a" style="left:744px;top:534px;width:25px;height:2px;background:#8a2b30"></div>
<div class="a" style="left:586px;top:552px;width:128px;height:3px;background:#3f7fd4;border-radius:2px"></div>
<div class="a" style="left:712px;top:550px;width:12px;height:7px;background:#f4f4f4;border-radius:3px"></div>
<svg class="a" style="left:728px;top:548px" width="13" height="11" viewBox="0 0 13 11"><path d="M1 3.5H3.5L7 0.8V10.2L3.5 7.5H1Z" fill="#f4f4f4"/><path d="M8.8 3.5Q10 5.5 8.8 7.5M10.5 2Q12.5 5.5 10.5 9" stroke="#f4f4f4" stroke-width="1.1" fill="none"/></svg>
<div class="tbtn" style="left:745px;top:545px;width:24px;height:18px;background:#2f323c"></div>
<div class="a" style="left:755.5px;top:548.5px;width:3px;height:3px;border-radius:50%;background:#eee;box-shadow:0 4px 0 #eee,0 8px 0 #eee"></div>
<div class="tbtn" style="left:585px;top:595px;width:23px;height:19px;background:#2d303a"></div>
<div class="tbtn" style="left:615px;top:595px;width:19px;height:19px;background:#2d303a"></div>
<svg class="a" style="left:590px;top:598px" width="14" height="12" viewBox="0 0 14 12"><circle cx="4.5" cy="7.5" r="2.8" fill="#eee"/><circle cx="4.5" cy="7.5" r="1" fill="#2d303a"/><circle cx="10" cy="3.5" r="2" fill="#eee"/><circle cx="10" cy="3.5" r="0.7" fill="#2d303a"/></svg>
<div class="a" style="left:622.5px;top:599.5px;width:3px;height:3px;border-radius:50%;background:#eee;box-shadow:0 4px 0 #eee,0 8px 0 #eee"></div>
<div class="dk" style="left:776px;top:446px;width:106px;height:170px"></div>
<div class="dkt" style="left:776px;top:446px;width:106px">Transiciones d...</div>
<svg class="a" style="left:868px;top:451px" width="11" height="11" viewBox="0 0 11 11"><path d="M0.7 0.7H7V2.5M0.7 0.7V6.5H3" stroke="#eee" stroke-width="1.2" fill="none"/><rect x="3.6" y="3.6" width="6.7" height="6.7" stroke="#eee" stroke-width="1.2" fill="none"/><path d="M3.6 5.2H10.3" stroke="#eee" stroke-width="1.2"/></svg>
<div class="a" style="left:781px;top:472px;width:95px;height:18px;background:#30333d;border-radius:3px"></div>
<div class="a ot" style="left:788px;top:474px;color:#d8d8dc">Desvanecimiento</div>
<svg class="a" style="left:865px;top:474px" width="8" height="13" viewBox="0 0 8 13"><path d="M1.5 5L4 2.5L6.5 5M1.5 8L4 10.5L6.5 8" stroke="#ccc" stroke-width="1" fill="none"/></svg>
<div class="a ot" style="left:780px;top:498px;color:#d8d8dc">Duración</div>
<div class="a" style="left:818px;top:494px;width:58px;height:19px;background:#30333d;border-radius:3px"></div>
<div class="a ot" style="left:824px;top:498px;color:#ececec">300 ms</div>
<svg class="a" style="left:863px;top:495px" width="10" height="17" viewBox="0 0 10 17"><path d="M2 5.5L5 2.5L8 5.5M2 11.5L5 14.5L8 11.5" stroke="#ccc" stroke-width="1.1" fill="none"/></svg>
<div class="tbtn" style="left:801px;top:518px;width:22px;height:17px;background:#2d303a"></div>
<div class="tbtn" style="left:830px;top:518px;width:18px;height:17px;background:#24262e"></div>
<div class="tbtn" style="left:856px;top:518px;width:19px;height:17px;background:#22242b"></div>
<svg class="a" style="left:807px;top:521px" width="10" height="10" viewBox="0 0 10 10"><path d="M5 0.5V9.5M0.5 5H9.5" stroke="#f2f2f2" stroke-width="1.4"/></svg>
<svg class="a" style="left:834px;top:520px" width="10" height="12" viewBox="0 0 10 12"><path d="M0.5 2.3H9.5M3.3 2V0.7H6.7V2" stroke="#f6f6f6" stroke-width="1.3" fill="none"/><path d="M1.6 3.4H8.4V11.2H1.6Z" stroke="#f6f6f6" stroke-width="1.5" fill="none"/><path d="M4 5V9.6M6 5V9.6" stroke="#f6f6f6" stroke-width="1"/></svg>
<div class="a" style="left:864.5px;top:520.5px;width:3px;height:3px;border-radius:50%;background:#eee;box-shadow:0 4px 0 #eee,0 8px 0 #eee"></div>
<div class="dk" style="left:884px;top:446px;width:129px;height:170px"></div>
<div class="dkt" style="left:884px;top:446px;width:129px">Controles</div>
<svg class="a" style="left:1000px;top:451px" width="11" height="11" viewBox="0 0 11 11"><path d="M0.7 0.7H7V2.5M0.7 0.7V6.5H3" stroke="#eee" stroke-width="1.2" fill="none"/><rect x="3.6" y="3.6" width="6.7" height="6.7" stroke="#eee" stroke-width="1.2" fill="none"/><path d="M3.6 5.2H10.3" stroke="#eee" stroke-width="1.2"/></svg>
<div class="cb" style="left:887px;top:471px;width:123px;height:23px;line-height:23px;background:#31343e">Iniciar Transmisión</div>
<div class="cb" style="left:887px;top:498px;width:123px;height:25px;line-height:25px;background:#3050c6">Detener Grabación</div>
<div class="cb" style="left:887px;top:527px;width:100px;height:19px;line-height:19px;background:#31343e">niciar Cámara Virtua</div>
<div class="cb" style="left:887px;top:549px;width:123px;height:20px;line-height:20px;background:#31343e">Modo Estudio</div>
<div class="cb" style="left:887px;top:572px;width:123px;height:19px;line-height:19px;background:#31343e">Ajustes</div>
<div class="cb" style="left:887px;top:594px;width:123px;height:20px;line-height:20px;background:#31343e">Salir</div>
<div class="tbtn" style="left:991px;top:527px;width:19px;height:19px;background:#31343e"></div>
<svg class="a" style="left:995px;top:531px" width="10" height="10" viewBox="0 0 10 10"><path d="M5 0.3l1.1 1.4 1.7-.5.3 1.8 1.7.7-.7 1.6 1 1.5-1.6.9.1 1.8-1.8 0-.8 1.6-1.3-1.1-1.3 1.1-.8-1.6-1.8 0 .1-1.8-1.6-.9 1-1.5-.7-1.6 1.7-.7.3-1.8 1.7.5z" fill="#f2f2f2"/><circle cx="5" cy="5" r="1.6" fill="#31343e"/></svg>
<!-- status -->
<div class="a" style="left:294px;top:616px;width:719px;height:17px;background:#1f2129"></div>
<svg class="a" style="left:725px;top:620px" width="14" height="12" viewBox="0 0 14 12"><path d="M3 1.5Q0 6 3 10.5M5 3Q3.3 6 5 9M11 1.5Q14 6 11 10.5M9 3Q10.7 6 9 9" stroke="#9a9a9a" stroke-width="1.2" fill="none"/><path d="M2 11L12 1" stroke="#bbb" stroke-width="1.3"/></svg>
<div class="a ost" style="left:743px">LIVE: 00:00:00</div>
<div class="a" style="left:803.5px;top:623px;width:6px;height:6px;border-radius:45%;background:#c0102a;box-shadow:0 0 2px #801020"></div>
<div class="a ost" style="left:817px">REC: 00:00:06</div>
<div class="a ost" style="left:886px">CPU: 8.3%, 30.00 fps</div>
<div class="a" style="left:1006px;top:626px;width:5px;height:5px;background:linear-gradient(135deg,transparent 50%,#999 50%)"></div>
<!-- cursor -->
<svg class="a" style="left:969px;top:115px" width="9" height="12" viewBox="0 0 9 12"><path d="M0.6 0.6V12L3.3 9.3L4.6 12H7L5.4 8.4H8.5Z" fill="#fff" stroke="#333" stroke-width="0.9"/></svg>
</div>
</div></div>
<!-- source toolbar -->
<div class="a" style="left:294px;top:413px;width:719px;height:32px;background:#2a2c35"></div>
<div class="a" style="left:294px;top:445px;width:719px;height:1px;background:#1f2129"></div>
<div class="a ot" style="left:300px;top:424px;width:108px;overflow:hidden">Ninguna fuente seleccionada</div>
<div class="a" style="left:436px;top:419px;width:79px;height:20px;background:#1f2129;border-radius:3px"></div>
<svg class="a" style="left:444px;top:424px" width="10" height="10" viewBox="0 0 10 10"><path d="M5 0.5l1 1.3 1.6-.4.3 1.6 1.6.6-.6 1.5.9 1.4-1.5.8.1 1.6-1.6 0-.7 1.5-1.2-1-1.2 1-.7-1.5-1.6 0 .1-1.6-1.5-.8.9-1.4-.6-1.5 1.6-.6.3-1.6 1.6.4z" fill="#f4f4f4"/><circle cx="5" cy="5" r="1.7" fill="#1f2129"/></svg>
<div class="a ot" style="left:456px;top:423px;color:#b9bac2">Propiedades</div>
<div class="a" style="left:519px;top:419px;width:55px;height:20px;background:#1f2129;border-radius:3px"></div>
<div class="a" style="left:528px;top:424px;width:9px;height:10px;background:linear-gradient(90deg,#ddd 0 35%,#555 35% 65%,#ccc 65%);border:1px solid #eee"></div>
<div class="a ot" style="left:540px;top:423px;color:#b9bac2">Filtros</div>
<!-- dock frames -->
<div class="a" style="left:294px;top:446px;width:719px;height:170px;background:#21232b"></div>
<div class="dk" style="left:294px;top:446px;width:139px;height:170px"></div>
<div class="dkt" style="left:294px;top:446px;width:139px">Escenas</div>
<svg class="a" style="left:419px;top:451px" width="11" height="11" viewBox="0 0 11 11"><path d="M0.7 0.7H7V2.5M0.7 0.7V6.5H3" stroke="#eee" stroke-width="1.2" fill="none"/><rect x="3.6" y="3.6" width="6.7" height="6.7" stroke="#eee" stroke-width="1.2" fill="none"/><path d="M3.6 5.2H10.3" stroke="#eee" stroke-width="1.2"/></svg>
<div class="a" style="left:296px;top:469px;width:135px;height:22px;background:#3050c6;border-radius:1px"></div>
<div class="a ot" style="left:302px;top:474px;color:#f0f2ff">Escena</div>
<div class="tbtn" style="left:299px;top:596px;width:20px;height:19px;background:#2d303a"></div>
<div class="tbtn" style="left:322px;top:596px;width:21px;height:19px;background:#2d303a"></div>
<div class="tbtn" style="left:351px;top:596px;width:18px;height:19px;background:#2d303a"></div>
<div class="tbtn" style="left:376px;top:596px;width:21px;height:19px;background:#2d303a"></div>
<div class="tbtn" style="left:400px;top:596px;width:21px;height:19px;background:#2d303a"></div>
<svg class="a" style="left:304px;top:600px" width="10" height="10" viewBox="0 0 10 10"><path d="M5 0.5V9.5M0.5 5H9.5" stroke="#f2f2f2" stroke-width="1.4"/></svg>
<svg class="a" style="left:328px;top:599px" width="10" height="12" viewBox="0 0 10 12"><path d="M0.5 2.3H9.5M3.3 2V0.7H6.7V2" stroke="#f6f6f6" stroke-width="1.3" fill="none"/><path d="M1.6 3.4H8.4V11.2H1.6Z" stroke="#f6f6f6" stroke-width="1.5" fill="none"/><path d="M4 5V9.6M6 5V9.6" stroke="#f6f6f6" stroke-width="1"/></svg>
<svg class="a" style="left:354px;top:600px" width="10" height="10" viewBox="0 0 10 10"><rect x="0.6" y="0.6" width="8.8" height="8.8" stroke="#eee" stroke-width="1.2" fill="#555"/><rect x="1.5" y="1.5" width="3" height="7" fill="#ddd"/><path d="M6 2V8" stroke="#ccc" stroke-width="1"/></svg>
<svg class="a" style="left:380px;top:601px" width="12" height="8" viewBox="0 0 12 8"><path d="M1 6.5L6 1.8L11 6.5" stroke="#eee" stroke-width="1.4" fill="none"/></svg>
<svg class="a" style="left:404px;top:601px" width="12" height="8" viewBox="0 0 12 8"><path d="M1 1.5L6 6.2L11 1.5" stroke="#eee" stroke-width="1.4" fill="none"/></svg>
<div class="dk" style="left:436px;top:446px;width:144px;height:170px"></div>
<div class="dkt" style="left:436px;top:446px;width:144px">Fuentes</div>
<svg class="a" style="left:567px;top:451px" width="11" height="11" viewBox="0 0 11 11"><path d="M0.7 0.7H7V2.5M0.7 0.7V6.5H3" stroke="#eee" stroke-width="1.2" fill="none"/><rect x="3.6" y="3.6" width="6.7" height="6.7" stroke="#eee" stroke-width="1.2" fill="none"/><path d="M3.6 5.2H10.3" stroke="#eee" stroke-width="1.2"/></svg>
<svg class="a" style="left:444px;top:474px" width="12" height="11" viewBox="0 0 12 11"><rect x="0.7" y="0.7" width="10.6" height="7.6" rx="1.5" stroke="#eee" stroke-width="1.3" fill="none"/><path d="M3 10.3H9" stroke="#eee" stroke-width="1.2"/></svg>
<div class="a ot" style="left:460px;top:474px;width:77px;overflow:hidden;color:#e8e8e8">Captura de pantalla</div>
<svg class="a" style="left:539px;top:475px" width="12" height="9" viewBox="0 0 12 9"><path d="M0.5 4.5Q6 -2 11.5 4.5Q6 11 0.5 4.5Z" fill="#f2f2f2"/><circle cx="6" cy="4.5" r="2" fill="#272a33"/><circle cx="6" cy="4.5" r="1" fill="#f2f2f2"/></svg>
<svg class="a" style="left:559px;top:473px" width="9" height="12" viewBox="0 0 9 12"><path d="M2.2 5.5V3.2A2.3 2.3 0 0 1 6.8 3.2V3.8" stroke="#aaa" stroke-width="1.3" fill="none"/><rect x="0.5" y="5.5" width="8" height="6" fill="#aaa"/></svg>
<div class="tbtn" style="left:440px;top:596px;width:20px;height:19px;background:#2d303a"></div>
<div class="tbtn" style="left:463px;top:596px;width:21px;height:19px;background:#2d303a"></div>
<div class="tbtn" style="left:490px;top:596px;width:21px;height:19px;background:#2d303a"></div>
<div class="tbtn" style="left:517px;top:596px;width:22px;height:19px;background:#2d303a"></div>
<div class="tbtn" style="left:540px;top:596px;width:22px;height:19px;background:#2d303a"></div>
<svg class="a" style="left:445px;top:600px" width="10" height="10" viewBox="0 0 10 10"><path d="M5 0.5V9.5M0.5 5H9.5" stroke="#f2f2f2" stroke-width="1.4"/></svg>
<svg class="a" style="left:468px;top:599px" width="10" height="12" viewBox="0 0 10 12"><path d="M0.5 2.3H9.5M3.3 2V0.7H6.7V2" stroke="#f6f6f6" stroke-width="1.3" fill="none"/><path d="M1.6 3.4H8.4V11.2H1.6Z" stroke="#f6f6f6" stroke-width="1.5" fill="none"/><path d="M4 5V9.6M6 5V9.6" stroke="#f6f6f6" stroke-width="1"/></svg>
<svg class="a" style="left:495px;top:600px" width="10" height="10" viewBox="0 0 10 10"><path d="M5 0.3l1.1 1.4 1.7-.5.3 1.8 1.7.7-.7 1.6 1 1.5-1.6.9.1 1.8-1.8 0-.8 1.6-1.3-1.1-1.3 1.1-.8-1.6-1.8 0 .1-1.8-1.6-.9 1-1.5-.7-1.6 1.7-.7.3-1.8 1.7.5z" fill="#f2f2f2"/><circle cx="5" cy="5" r="1.6" fill="#2d303a"/></svg>
<svg class="a" style="left:522px;top:601px" width="12" height="8" viewBox="0 0 12 8"><path d="M1 6.5L6 1.8L11 6.5" stroke="#eee" stroke-width="1.4" fill="none"/></svg>
<svg class="a" style="left:545px;top:601px" width="12" height="8" viewBox="0 0 12 8"><path d="M1 1.5L6 6.2L11 1.5" stroke="#eee" stroke-width="1.4" fill="none"/></svg>
<div class="dk" style="left:583px;top:446px;width:187px;height:170px"></div>
<div class="dkt" style="left:583px;top:446px;width:187px">Mezclador de audio</div>
<svg class="a" style="left:759px;top:451px" width="11" height="11" viewBox="0 0 11 11"><path d="M0.7 0.7H7V2.5M0.7 0.7V6.5H3" stroke="#eee" stroke-width="1.2" fill="none"/><rect x="3.6" y="3.6" width="6.7" height="6.7" stroke="#eee" stroke-width="1.2" fill="none"/><path d="M3.6 5.2H10.3" stroke="#eee" stroke-width="1.2"/></svg>
<div class="a ot" style="left:586px;top:471px;color:#ececec">Audio del escritorio</div>
<div class="a ot" style="left:743.5px;top:471px;color:#ececec">0.0 dB</div>
<div class="a" style="left:590px;top:484px;width:154px;height:2px;background:#747474"></div>
<div class="a" style="left:744px;top:484px;width:25px;height:3px;background:#3b3d46"></div>
<div class="sc" style="left:587px;top:489px">-60</div>
<div class="sc" style="left:587px;top:537px">-60</div>
<div class="sc" style="left:602px;top:489px">-55</div>
<div class="sc" style="left:602px;top:537px">-55</div>
<div class="sc" style="left:617px;top:489px">-50</div>
<div class="sc" style="left:617px;top:537px">-50</div>
<div class="sc" style="left:632px;top:489px">-45</div>
<div class="sc" style="left:632px;top:537px">-45</div>
<div class="sc" style="left:647px;top:489px">-40</div>
<div class="sc" style="left:647px;top:537px">-40</div>
<div class="sc" style="left:661px;top:489px">-35</div>
<div class="sc" style="left:661px;top:537px">-35</div>
<div class="sc" style="left:676px;top:489px">-30</div>
<div class="sc" style="left:676px;top:537px">-30</div>
<div class="sc" style="left:691px;top:489px">-25</div>
<div class="sc" style="left:691px;top:537px">-25</div>
<div class="sc" style="left:706px;top:489px">-20</div>
<div class="sc" style="left:706px;top:537px">-20</div>
<div class="sc" style="left:721px;top:489px">-15</div>
<div class="sc" style="left:721px;top:537px">-15</div>
<div class="sc" style="left:736px;top:489px">-10</div>
<div class="sc" style="left:736px;top:537px">-10</div>
<div class="sc" style="left:753px;top:489px">-5</div>
<div class="sc" style="left:753px;top:537px">-5</div>
<div class="sc" style="left:765px;top:489px">0</div>
<div class="sc" style="left:765px;top:537px">0</div>
<div class="a" style="left:586px;top:504px;width:128px;height:3px;background:#3f7fd4;border-radius:2px"></div>
<div class="a" style="left:712px;top:502px;width:12px;height:7px;background:#f4f4f4;border-radius:3px"></div>
<svg class="a" style="left:727px;top:501px" width="14" height="10" viewBox="0 0 14 10"><path d="M1 3H3.5L7 0.5V9.5L3.5 7H1Z" fill="#c0141e"/><path d="M8.5 3L12.5 7M12.5 3L8.5 7" stroke="#c0141e" stroke-width="1.4"/></svg>
<div class="tbtn" style="left:745px;top:497px;width:24px;height:18px;background:#2f323c"></div>
<div class="a" style="left:755.5px;top:500.5px;width:3px;height:3px;border-radius:50%;background:#eee;box-shadow:0 4px 0 #eee,0 8px 0 #eee"></div>
<div class="a ot" style="left:586px;top:521px;color:#ececec">Mic/Aux</div>
<div class="a ot" style="left:743.5px;top:521px;color:#ececec">0.0 dB</div>
<div class="a" style="left:587px;top:534px;width:157px;height:2px;background:#5d8a2a"></div>
<div class="a" style="left:744px;top:534px;width:25px;height:2px;background:#8a2b30"></div>
<div class="a" style="left:586px;top:552px;width:128px;height:3px;background:#3f7fd4;border-radius:2px"></div>
<div class="a" style="left:712px;top:550px;width:12px;height:7px;background:#f4f4f4;border-radius:3px"></div>
<svg class="a" style="left:728px;top:548px" width="13" height="11" viewBox="0 0 13 11"><path d="M1 3.5H3.5L7 0.8V10.2L3.5 7.5H1Z" fill="#f4f4f4"/><path d="M8.8 3.5Q10 5.5 8.8 7.5M10.5 2Q12.5 5.5 10.5 9" stroke="#f4f4f4" stroke-width="1.1" fill="none"/></svg>
<div class="tbtn" style="left:745px;top:545px;width:24px;height:18px;background:#2f323c"></div>
<div class="a" style="left:755.5px;top:548.5px;width:3px;height:3px;border-radius:50%;background:#eee;box-shadow:0 4px 0 #eee,0 8px 0 #eee"></div>
<div class="tbtn" style="left:585px;top:595px;width:23px;height:19px;background:#2d303a"></div>
<div class="tbtn" style="left:615px;top:595px;width:19px;height:19px;background:#2d303a"></div>
<svg class="a" style="left:590px;top:598px" width="14" height="12" viewBox="0 0 14 12"><circle cx="4.5" cy="7.5" r="2.8" fill="#eee"/><circle cx="4.5" cy="7.5" r="1" fill="#2d303a"/><circle cx="10" cy="3.5" r="2" fill="#eee"/><circle cx="10" cy="3.5" r="0.7" fill="#2d303a"/></svg>
<div class="a" style="left:622.5px;top:599.5px;width:3px;height:3px;border-radius:50%;background:#eee;box-shadow:0 4px 0 #eee,0 8px 0 #eee"></div>
<div class="dk" style="left:776px;top:446px;width:106px;height:170px"></div>
<div class="dkt" style="left:776px;top:446px;width:106px">Transiciones d...</div>
<svg class="a" style="left:868px;top:451px" width="11" height="11" viewBox="0 0 11 11"><path d="M0.7 0.7H7V2.5M0.7 0.7V6.5H3" stroke="#eee" stroke-width="1.2" fill="none"/><rect x="3.6" y="3.6" width="6.7" height="6.7" stroke="#eee" stroke-width="1.2" fill="none"/><path d="M3.6 5.2H10.3" stroke="#eee" stroke-width="1.2"/></svg>
<div class="a" style="left:781px;top:472px;width:95px;height:18px;background:#30333d;border-radius:3px"></div>
<div class="a ot" style="left:788px;top:474px;color:#d8d8dc">Desvanecimiento</div>
<svg class="a" style="left:865px;top:474px" width="8" height="13" viewBox="0 0 8 13"><path d="M1.5 5L4 2.5L6.5 5M1.5 8L4 10.5L6.5 8" stroke="#ccc" stroke-width="1" fill="none"/></svg>
<div class="a ot" style="left:780px;top:498px;color:#d8d8dc">Duración</div>
<div class="a" style="left:818px;top:494px;width:58px;height:19px;background:#30333d;border-radius:3px"></div>
<div class="a ot" style="left:824px;top:498px;color:#ececec">300 ms</div>
<svg class="a" style="left:863px;top:495px" width="10" height="17" viewBox="0 0 10 17"><path d="M2 5.5L5 2.5L8 5.5M2 11.5L5 14.5L8 11.5" stroke="#ccc" stroke-width="1.1" fill="none"/></svg>
<div class="tbtn" style="left:801px;top:518px;width:22px;height:17px;background:#2d303a"></div>
<div class="tbtn" style="left:830px;top:518px;width:18px;height:17px;background:#24262e"></div>
<div class="tbtn" style="left:856px;top:518px;width:19px;height:17px;background:#22242b"></div>
<svg class="a" style="left:807px;top:521px" width="10" height="10" viewBox="0 0 10 10"><path d="M5 0.5V9.5M0.5 5H9.5" stroke="#f2f2f2" stroke-width="1.4"/></svg>
<svg class="a" style="left:834px;top:520px" width="10" height="12" viewBox="0 0 10 12"><path d="M0.5 2.3H9.5M3.3 2V0.7H6.7V2" stroke="#f6f6f6" stroke-width="1.3" fill="none"/><path d="M1.6 3.4H8.4V11.2H1.6Z" stroke="#f6f6f6" stroke-width="1.5" fill="none"/><path d="M4 5V9.6M6 5V9.6" stroke="#f6f6f6" stroke-width="1"/></svg>
<div class="a" style="left:864.5px;top:520.5px;width:3px;height:3px;border-radius:50%;background:#eee;box-shadow:0 4px 0 #eee,0 8px 0 #eee"></div>
<div class="dk" style="left:884px;top:446px;width:129px;height:170px"></div>
<div class="dkt" style="left:884px;top:446px;width:129px">Controles</div>
<svg class="a" style="left:1000px;top:451px" width="11" height="11" viewBox="0 0 11 11"><path d="M0.7 0.7H7V2.5M0.7 0.7V6.5H3" stroke="#eee" stroke-width="1.2" fill="none"/><rect x="3.6" y="3.6" width="6.7" height="6.7" stroke="#eee" stroke-width="1.2" fill="none"/><path d="M3.6 5.2H10.3" stroke="#eee" stroke-width="1.2"/></svg>
<div class="cb" style="left:887px;top:471px;width:123px;height:23px;line-height:23px;background:#31343e">Iniciar Transmisión</div>
<div class="cb" style="left:887px;top:498px;width:123px;height:25px;line-height:25px;background:#3050c6">Detener Grabación</div>
<div class="cb" style="left:887px;top:527px;width:100px;height:19px;line-height:19px;background:#31343e">niciar Cámara Virtua</div>
<div class="cb" style="left:887px;top:549px;width:123px;height:20px;line-height:20px;background:#31343e">Modo Estudio</div>
<div class="cb" style="left:887px;top:572px;width:123px;height:19px;line-height:19px;background:#31343e">Ajustes</div>
<div class="cb" style="left:887px;top:594px;width:123px;height:20px;line-height:20px;background:#31343e">Salir</div>
<div class="tbtn" style="left:991px;top:527px;width:19px;height:19px;background:#31343e"></div>
<svg class="a" style="left:995px;top:531px" width="10" height="10" viewBox="0 0 10 10"><path d="M5 0.3l1.1 1.4 1.7-.5.3 1.8 1.7.7-.7 1.6 1 1.5-1.6.9.1 1.8-1.8 0-.8 1.6-1.3-1.1-1.3 1.1-.8-1.6-1.8 0 .1-1.8-1.6-.9 1-1.5-.7-1.6 1.7-.7.3-1.8 1.7.5z" fill="#f2f2f2"/><circle cx="5" cy="5" r="1.6" fill="#31343e"/></svg>
<!-- status -->
<div class="a" style="left:294px;top:616px;width:719px;height:17px;background:#1f2129"></div>
<svg class="a" style="left:725px;top:620px" width="14" height="12" viewBox="0 0 14 12"><path d="M3 1.5Q0 6 3 10.5M5 3Q3.3 6 5 9M11 1.5Q14 6 11 10.5M9 3Q10.7 6 9 9" stroke="#9a9a9a" stroke-width="1.2" fill="none"/><path d="M2 11L12 1" stroke="#bbb" stroke-width="1.3"/></svg>
<div class="a ost" style="left:743px">LIVE: 00:00:00</div>
<div class="a" style="left:803.5px;top:623px;width:6px;height:6px;border-radius:45%;background:#c0102a;box-shadow:0 0 2px #801020"></div>
<div class="a ost" style="left:817px">REC: 00:00:06</div>
<div class="a ost" style="left:886px">CPU: 8.3%, 30.00 fps</div>
<div class="a" style="left:1006px;top:626px;width:5px;height:5px;background:linear-gradient(135deg,transparent 50%,#999 50%)"></div>
<!-- cursor -->
<svg class="a" style="left:969px;top:115px" width="9" height="12" viewBox="0 0 9 12"><path d="M0.6 0.6V12L3.3 9.3L4.6 12H7L5.4 8.4H8.5Z" fill="#fff" stroke="#333" stroke-width="0.9"/></svg>
</div>
</body></html>
